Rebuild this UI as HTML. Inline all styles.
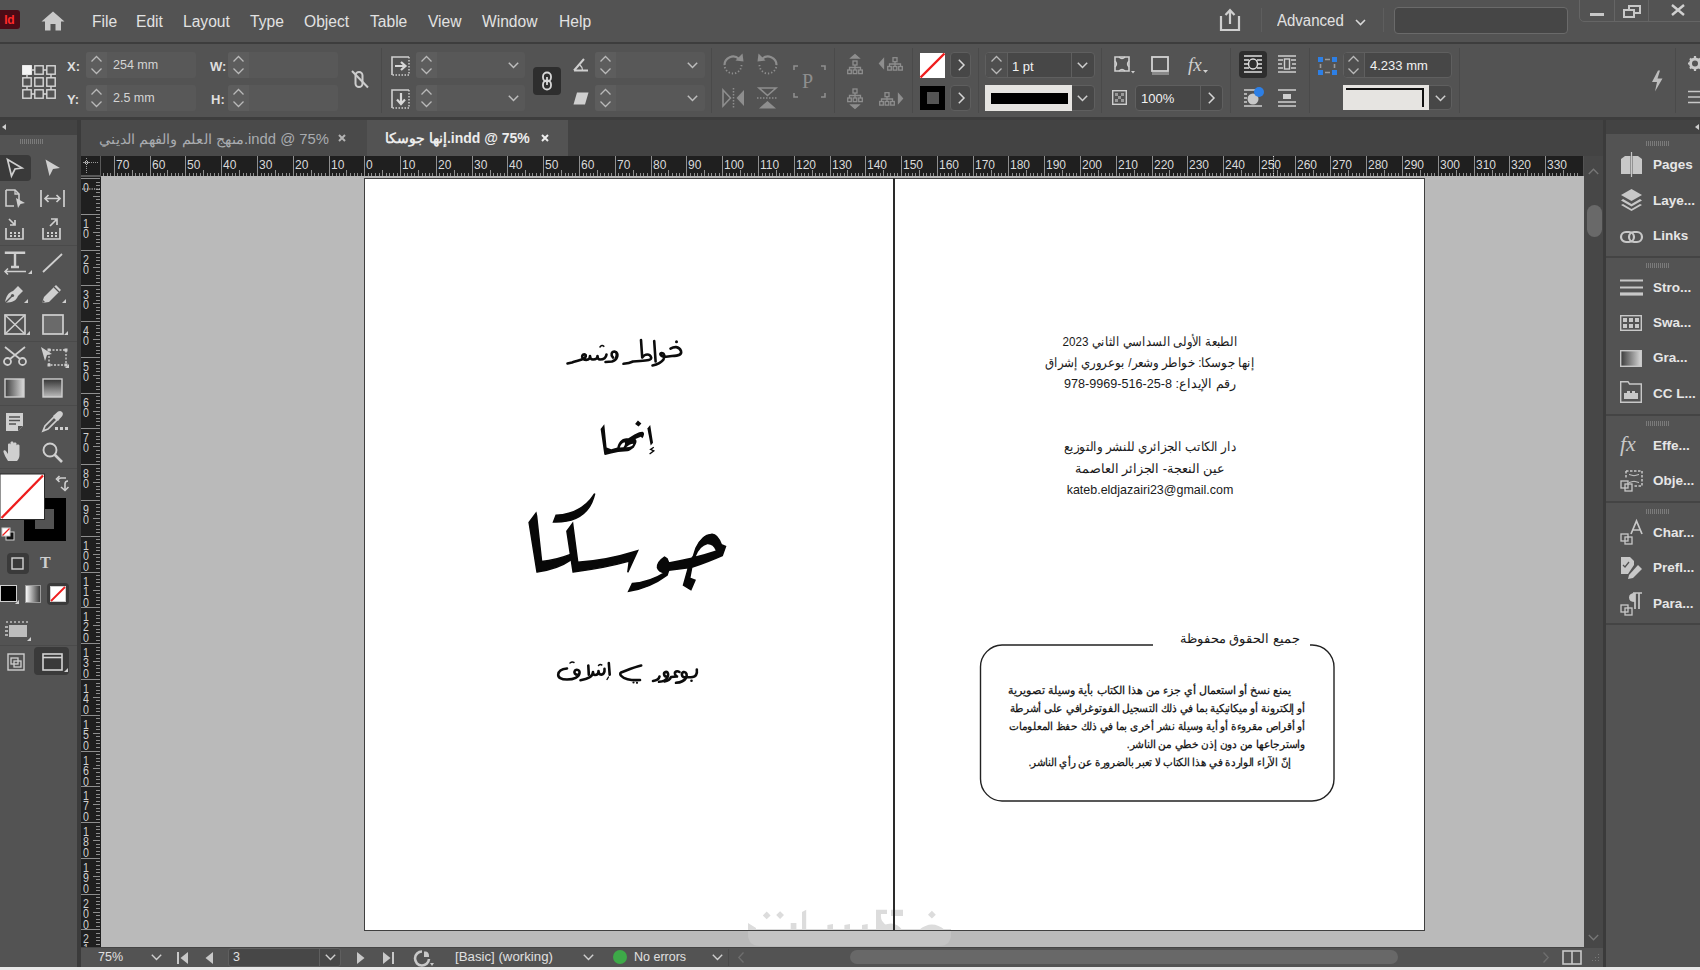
<!DOCTYPE html>
<html><head><meta charset="utf-8"><style>
*{margin:0;padding:0;box-sizing:border-box}
html,body{width:1700px;height:970px;overflow:hidden;background:#535353;font-family:"Liberation Sans",sans-serif;color:#dcdcdc}
.a{position:absolute}
.t{position:absolute;white-space:nowrap;line-height:1}
svg{position:absolute;overflow:visible}
.fld{position:absolute;background:#5a5a5a;border-radius:3px}
.stp{position:absolute;background:#5f5f5f;border-radius:3px 0 0 3px}
.sep{position:absolute;width:1px;background:#4a4a4a}
.ic{fill:none;stroke:#d0d0d0;stroke-width:1.4}
.dim{fill:none;stroke:#8c8c8c;stroke-width:1.5}
.pl{position:absolute;font-weight:bold;font-size:13.5px;color:#e6e6e6;white-space:nowrap;line-height:1}
</style></head><body>
<div class="a" style="left:0;top:0;width:1700px;height:42px;background:#535353"></div>
<div class="a" style="left:0;top:42px;width:1700px;height:2px;background:#3d3d3d"></div>
<div class="a" style="left:0;top:10px;width:20px;height:19px;background:#4c0b16;border-radius:0 3px 3px 0"></div>
<div class="t" style="left:4.3px;top:13.5px;font-size:12px;font-weight:bold;color:#ff2a2a;letter-spacing:-0.3px">Id</div>
<svg style="left:41px;top:11px" width="24" height="20" viewBox="0 0 24 20"><path d="M12 0.5 L23.5 10.5 L20 10.5 L20 19.5 L14.5 19.5 L14.5 13 L9.5 13 L9.5 19.5 L4 19.5 L4 10.5 L0.5 10.5 Z" fill="#c9c9c9"/></svg>
<div class="t" style="left:92px;top:14.2px;font-size:15.6px;color:#e2e2e2">File</div>
<div class="t" style="left:136px;top:14.2px;font-size:15.6px;color:#e2e2e2">Edit</div>
<div class="t" style="left:183px;top:14.2px;font-size:15.6px;color:#e2e2e2">Layout</div>
<div class="t" style="left:250px;top:14.2px;font-size:15.6px;color:#e2e2e2">Type</div>
<div class="t" style="left:304px;top:14.2px;font-size:15.6px;color:#e2e2e2">Object</div>
<div class="t" style="left:370px;top:14.2px;font-size:15.6px;color:#e2e2e2">Table</div>
<div class="t" style="left:428px;top:14.2px;font-size:15.6px;color:#e2e2e2">View</div>
<div class="t" style="left:482px;top:14.2px;font-size:15.6px;color:#e2e2e2">Window</div>
<div class="t" style="left:559px;top:14.2px;font-size:15.6px;color:#e2e2e2">Help</div>
<svg style="left:1219px;top:8px" width="23" height="24" viewBox="0 0 23 24"><path d="M2 8 L2 22 L20 22 L20 8" fill="none" stroke="#cfcfcf" stroke-width="2.2"/><path d="M11 16 L11 2.5 M6.5 7 L11 2.2 L15.5 7" fill="none" stroke="#cfcfcf" stroke-width="2.2"/></svg>
<div class="a" style="left:1261px;top:8px;width:1px;height:24px;background:#5e5e5e"></div>
<div class="t" style="left:1277px;top:12.8px;font-size:15.8px;color:#e2e2e2;transform:scaleX(0.95);transform-origin:0 0">Advanced</div>
<svg style="left:1355px;top:19px" width="11" height="7" viewBox="0 0 11 7"><path d="M1 1 L5.5 5.5 L10 1" fill="none" stroke="#d8d8d8" stroke-width="1.6"/></svg>
<div class="a" style="left:1383px;top:8px;width:1px;height:24px;background:#5e5e5e"></div>
<div class="a" style="left:1394px;top:7px;width:174px;height:27px;background:#464646;border:1px solid #6a6a6a;border-radius:4px"></div>
<div class="a" style="left:1579px;top:-2px;width:125px;height:24px;border:1px solid #656565;border-radius:0 0 0 5px"></div>
<div class="a" style="left:1614px;top:0;width:1px;height:22px;background:#656565"></div>
<div class="a" style="left:1648px;top:0;width:1px;height:22px;background:#656565"></div>
<div class="a" style="left:1590px;top:13px;width:14px;height:3px;background:#c8c8c8"></div>
<svg style="left:1623px;top:5px" width="18" height="13" viewBox="0 0 18 13"><rect x="1" y="5" width="10" height="7" fill="none" stroke="#c8c8c8" stroke-width="2"/><path d="M6 5 L6 1 L17 1 L17 8 L11 8" fill="none" stroke="#c8c8c8" stroke-width="2"/></svg>
<svg style="left:1670px;top:4px" width="16" height="12" viewBox="0 0 16 12"><path d="M2 1 L14 11 M14 1 L2 11" fill="none" stroke="#d0d0d0" stroke-width="2.4"/></svg>
<div class="a" style="left:0;top:117px;width:1700px;height:3px;background:#3d3d3d"></div>
<svg style="left:22px;top:65px" width="33" height="33" viewBox="0 0 33 33"><rect x="0.8" y="0.8" width="8.4" height="8.4" fill="#f4f4f4" stroke="#f4f4f4" stroke-width="1.4"/><rect x="12.8" y="0.8" width="8.4" height="8.4" fill="none" stroke="#d9d9d9" stroke-width="1.4"/><rect x="24.8" y="0.8" width="8.4" height="8.4" fill="none" stroke="#d9d9d9" stroke-width="1.4"/><rect x="0.8" y="12.8" width="8.4" height="8.4" fill="none" stroke="#d9d9d9" stroke-width="1.4"/><rect x="12.8" y="12.8" width="8.4" height="8.4" fill="none" stroke="#d9d9d9" stroke-width="1.4"/><rect x="24.8" y="12.8" width="8.4" height="8.4" fill="none" stroke="#d9d9d9" stroke-width="1.4"/><rect x="0.8" y="24.8" width="8.4" height="8.4" fill="none" stroke="#d9d9d9" stroke-width="1.4"/><rect x="12.8" y="24.8" width="8.4" height="8.4" fill="none" stroke="#d9d9d9" stroke-width="1.4"/><rect x="24.8" y="24.8" width="8.4" height="8.4" fill="none" stroke="#d9d9d9" stroke-width="1.4"/><path d="M9.2 5 L12.8 5 M21.2 5 L24.8 5 M9.2 29 L12.8 29 M21.2 29 L24.8 29 M5 9.2 L5 12.8 M29 9.2 L29 12.8 M5 21.2 L5 24.8 M29 21.2 L29 24.8" stroke="#d9d9d9" stroke-width="1.4"/></svg>
<div class="t" style="left:67px;top:60px;font-size:13px;font-weight:bold;color:#dedede">X:</div>
<div class="t" style="left:67px;top:93px;font-size:13px;font-weight:bold;color:#dedede">Y:</div>
<div class="t" style="left:210px;top:60px;font-size:13px;font-weight:bold;color:#dedede">W:</div>
<div class="t" style="left:211px;top:93px;font-size:13px;font-weight:bold;color:#dedede">H:</div>
<div class="fld" style="left:86px;top:52px;width:110px;height:26px;background:#585858"></div>
<div class="stp" style="left:86px;top:52px;width:21px;height:26px;background:#5d5d5d"></div>
<svg style="left:86px;top:52px" width="21" height="26" viewBox="0 0 21 26"><path d="M5.5 9.5 L10.5 4.5 L15.5 9.5 M5.5 16.5 L10.5 21.5 L15.5 16.5" fill="none" stroke="#b9b9b9" stroke-width="1.3"/></svg>
<div class="fld" style="left:86px;top:85px;width:110px;height:26px;background:#585858"></div>
<div class="stp" style="left:86px;top:85px;width:21px;height:26px;background:#5d5d5d"></div>
<svg style="left:86px;top:85px" width="21" height="26" viewBox="0 0 21 26"><path d="M5.5 9.5 L10.5 4.5 L15.5 9.5 M5.5 16.5 L10.5 21.5 L15.5 16.5" fill="none" stroke="#b9b9b9" stroke-width="1.3"/></svg>
<div class="fld" style="left:228px;top:52px;width:110px;height:26px;background:#585858"></div>
<div class="stp" style="left:228px;top:52px;width:21px;height:26px;background:#5d5d5d"></div>
<svg style="left:228px;top:52px" width="21" height="26" viewBox="0 0 21 26"><path d="M5.5 9.5 L10.5 4.5 L15.5 9.5 M5.5 16.5 L10.5 21.5 L15.5 16.5" fill="none" stroke="#b9b9b9" stroke-width="1.3"/></svg>
<div class="fld" style="left:228px;top:85px;width:110px;height:26px;background:#585858"></div>
<div class="stp" style="left:228px;top:85px;width:21px;height:26px;background:#5d5d5d"></div>
<svg style="left:228px;top:85px" width="21" height="26" viewBox="0 0 21 26"><path d="M5.5 9.5 L10.5 4.5 L15.5 9.5 M5.5 16.5 L10.5 21.5 L15.5 16.5" fill="none" stroke="#b9b9b9" stroke-width="1.3"/></svg>
<div class="t" style="left:113px;top:59px;font-size:12.5px;color:#d4d4d4">254 mm</div>
<div class="t" style="left:113px;top:92px;font-size:12.5px;color:#d4d4d4">2.5 mm</div>
<svg style="left:351px;top:70px" width="18" height="19" viewBox="0 0 18 19"><rect x="4.5" y="2" width="7" height="15" rx="3.5" fill="none" stroke="#cdcdcd" stroke-width="2"/><path d="M1 1 L17 17.5" stroke="#cdcdcd" stroke-width="2"/></svg>
<div class="a" style="left:381px;top:48px;width:1px;height:65px;background:#4a4a4a"></div>
<svg style="left:391px;top:56px" width="20" height="20" viewBox="0 0 20 20"><path d="M1 19 L1 1 L18 1" fill="none" stroke="#d0d0d0" stroke-width="1.6"/><path d="M18 1 L18 19 L1 19" fill="none" stroke="#d0d0d0" stroke-width="1.4" stroke-dasharray="1.5 1.5"/><path d="M4 10 L13 10 M10 6 L14.5 10 L10 14" fill="none" stroke="#d8d8d8" stroke-width="2.2"/></svg>
<svg style="left:391px;top:89px" width="20" height="20" viewBox="0 0 20 20"><path d="M1 19 L1 1 L18 1" fill="none" stroke="#d0d0d0" stroke-width="1.6"/><path d="M18 1 L18 19 L1 19" fill="none" stroke="#d0d0d0" stroke-width="1.4" stroke-dasharray="1.5 1.5"/><path d="M10 4 L10 14 M6 10.5 L10 15 L14 10.5" fill="none" stroke="#d8d8d8" stroke-width="2.2"/></svg>
<div class="fld" style="left:416px;top:52px;width:109px;height:26px;background:#585858"></div>
<div class="stp" style="left:416px;top:52px;width:21px;height:26px;background:#5d5d5d"></div>
<svg style="left:416px;top:52px" width="21" height="26" viewBox="0 0 21 26"><path d="M5.5 9.5 L10.5 4.5 L15.5 9.5 M5.5 16.5 L10.5 21.5 L15.5 16.5" fill="none" stroke="#b9b9b9" stroke-width="1.3"/></svg>
<svg style="left:508px;top:62px" width="11" height="7" viewBox="0 0 11 7"><path d="M0.8 0.8 L5.5 5.5 L10.2 0.8" fill="none" stroke="#bdbdbd" stroke-width="1.5"/></svg>
<div class="fld" style="left:416px;top:85px;width:109px;height:26px;background:#585858"></div>
<div class="stp" style="left:416px;top:85px;width:21px;height:26px;background:#5d5d5d"></div>
<svg style="left:416px;top:85px" width="21" height="26" viewBox="0 0 21 26"><path d="M5.5 9.5 L10.5 4.5 L15.5 9.5 M5.5 16.5 L10.5 21.5 L15.5 16.5" fill="none" stroke="#b9b9b9" stroke-width="1.3"/></svg>
<svg style="left:508px;top:95px" width="11" height="7" viewBox="0 0 11 7"><path d="M0.8 0.8 L5.5 5.5 L10.2 0.8" fill="none" stroke="#bdbdbd" stroke-width="1.5"/></svg>
<div class="a" style="left:533px;top:67px;width:28px;height:28px;background:#2e2e2e;border-radius:4px"></div>
<svg style="left:540px;top:71px" width="14" height="20" viewBox="0 0 14 20"><rect x="3" y="1.5" width="8" height="9" rx="4" fill="none" stroke="#d8d8d8" stroke-width="1.8"/><rect x="3" y="9.5" width="8" height="9" rx="4" fill="none" stroke="#d8d8d8" stroke-width="1.8"/><path d="M7 6 L7 14" stroke="#d8d8d8" stroke-width="1.8"/></svg>
<svg style="left:573px;top:57px" width="16" height="15" viewBox="0 0 16 15"><path d="M1 13.5 L15 13.5 M1 13.5 L11 2" fill="none" stroke="#cfcfcf" stroke-width="2"/><path d="M7 8 Q9.5 10 9.5 13.5" fill="none" stroke="#cfcfcf" stroke-width="1.4"/></svg>
<svg style="left:573px;top:92px" width="16" height="13" viewBox="0 0 16 13"><path d="M4 0.5 L15.5 0.5 L12 12.5 L0.5 12.5 Z" fill="#cfcfcf"/></svg>
<div class="fld" style="left:595px;top:52px;width:110px;height:26px;background:#585858"></div>
<div class="stp" style="left:595px;top:52px;width:21px;height:26px;background:#5d5d5d"></div>
<svg style="left:595px;top:52px" width="21" height="26" viewBox="0 0 21 26"><path d="M5.5 9.5 L10.5 4.5 L15.5 9.5 M5.5 16.5 L10.5 21.5 L15.5 16.5" fill="none" stroke="#b9b9b9" stroke-width="1.3"/></svg>
<svg style="left:687px;top:62px" width="11" height="7" viewBox="0 0 11 7"><path d="M0.8 0.8 L5.5 5.5 L10.2 0.8" fill="none" stroke="#bdbdbd" stroke-width="1.5"/></svg>
<div class="fld" style="left:595px;top:85px;width:110px;height:26px;background:#585858"></div>
<div class="stp" style="left:595px;top:85px;width:21px;height:26px;background:#5d5d5d"></div>
<svg style="left:595px;top:85px" width="21" height="26" viewBox="0 0 21 26"><path d="M5.5 9.5 L10.5 4.5 L15.5 9.5 M5.5 16.5 L10.5 21.5 L15.5 16.5" fill="none" stroke="#b9b9b9" stroke-width="1.3"/></svg>
<svg style="left:687px;top:95px" width="11" height="7" viewBox="0 0 11 7"><path d="M0.8 0.8 L5.5 5.5 L10.2 0.8" fill="none" stroke="#bdbdbd" stroke-width="1.5"/></svg>
<div class="a" style="left:711px;top:48px;width:1px;height:65px;background:#4a4a4a"></div>
<svg style="left:722px;top:53px" width="23" height="22" viewBox="0 0 23 22"><path d="M2.5 12 A8.5 8.5 0 0 1 17 6" fill="none" stroke="#8e8e8e" stroke-width="2.2"/><path d="M19.5 12 A8.5 8.5 0 0 1 2.5 12" fill="none" stroke="#8e8e8e" stroke-width="1.8" stroke-dasharray="1.3 2"/><path d="M13.5 7.5 L21.5 8.5 L20.5 0.5 Z" fill="#8e8e8e"/></svg>
<svg style="left:756px;top:53px" width="23" height="22" viewBox="0 0 23 22"><path d="M20.5 12 A8.5 8.5 0 0 0 6 6" fill="none" stroke="#8e8e8e" stroke-width="2.2"/><path d="M3.5 12 A8.5 8.5 0 0 0 20.5 12" fill="none" stroke="#8e8e8e" stroke-width="1.8" stroke-dasharray="1.3 2"/><path d="M9.5 7.5 L1.5 8.5 L2.5 0.5 Z" fill="#8e8e8e"/></svg>
<svg style="left:722px;top:88px" width="23" height="20" viewBox="0 0 23 20"><path d="M1 2 L8.5 10 L1 18 Z" fill="none" stroke="#8e8e8e" stroke-width="1.6"/><path d="M22 2 L14.5 10 L22 18 Z" fill="#8e8e8e"/><path d="M11.5 0 L11.5 20" stroke="#8e8e8e" stroke-width="1.5" stroke-dasharray="1.5 1.5"/></svg>
<svg style="left:757px;top:87px" width="21" height="22" viewBox="0 0 21 22"><path d="M2 1 L19 1 L10.5 8.5 Z" fill="none" stroke="#8e8e8e" stroke-width="1.6"/><path d="M2 21.5 L19 21.5 L10.5 14 Z" fill="#8e8e8e"/><path d="M0 11 L21 11" stroke="#8e8e8e" stroke-width="1.5" stroke-dasharray="1.5 1.5"/></svg>
<svg style="left:793px;top:65px" width="33" height="33" viewBox="0 0 33 33"><path d="M1 5 L1 1 L5 1 M28 1 L32 1 L32 5 M1 28 L1 32 L5 32 M32 28 L32 32 L28 32" fill="none" stroke="#8e8e8e" stroke-width="1.6"/></svg>
<div class="t" style="left:802px;top:71px;font-family:'Liberation Serif',serif;font-size:20px;color:#8e8e8e">P</div>
<div class="a" style="left:834px;top:48px;width:1px;height:65px;background:#4a4a4a"></div>
<svg style="left:847px;top:54px" width="26" height="22" viewBox="0 0 26 22"><g fill="none" stroke="#8e8e8e" stroke-width="1.3"><path d="M4 4 L8 0.5 L12 4 Z" fill="#8e8e8e"/><rect x="6" y="7" width="4" height="4"/><rect x="0.7" y="16" width="3.6" height="3.6"/><rect x="6.2" y="16" width="3.6" height="3.6"/><rect x="11.7" y="16" width="3.6" height="3.6"/><path d="M8 11 L8 16 M2.5 16 L2.5 13.5 L13.5 13.5 L13.5 16"/></g></svg>
<svg style="left:847px;top:88px" width="26" height="22" viewBox="0 0 26 22"><g fill="none" stroke="#8e8e8e" stroke-width="1.3"><rect x="6" y="1" width="4" height="4"/><rect x="0.7" y="10" width="3.6" height="3.6"/><rect x="6.2" y="10" width="3.6" height="3.6"/><rect x="11.7" y="10" width="3.6" height="3.6"/><path d="M8 5 L8 10 M2.5 10 L2.5 7.5 L13.5 7.5 L13.5 10"/><path d="M4 17 L8 20.5 L12 17 Z" fill="#8e8e8e"/></g></svg>
<svg style="left:879px;top:57px" width="26" height="22" viewBox="0 0 26 22"><g fill="none" stroke="#8e8e8e" stroke-width="1.3"><path d="M4.5 2 L0.5 6.5 L4.5 11 Z" fill="#8e8e8e"/><rect x="14" y="0.7" width="4" height="4"/><rect x="8.7" y="9.5" width="3.6" height="3.6"/><rect x="14.2" y="9.5" width="3.6" height="3.6"/><rect x="19.7" y="9.5" width="3.6" height="3.6"/><path d="M16 4.7 L16 9.5 M10.5 9.5 L10.5 7 L21.5 7 L21.5 9.5"/></g></svg>
<svg style="left:879px;top:92px" width="26" height="22" viewBox="0 0 26 22"><g fill="none" stroke="#8e8e8e" stroke-width="1.3"><path d="M19.5 2 L23.5 6.5 L19.5 11 Z" fill="#8e8e8e"/><rect x="6" y="0.7" width="4" height="4"/><rect x="0.7" y="9.5" width="3.6" height="3.6"/><rect x="6.2" y="9.5" width="3.6" height="3.6"/><rect x="11.7" y="9.5" width="3.6" height="3.6"/><path d="M8 4.7 L8 9.5 M2.5 9.5 L2.5 7 L13.5 7 L13.5 9.5"/></g></svg>
<div class="a" style="left:912px;top:48px;width:1px;height:65px;background:#4a4a4a"></div>
<svg style="left:920px;top:53px" width="25" height="25" viewBox="0 0 25 25"><rect x="0" y="0" width="25" height="25" fill="#fff"/><path d="M0.5 24.5 L24.5 0.5" stroke="#ee1c1c" stroke-width="2.4"/></svg>
<div class="a" style="left:920px;top:86px;width:25px;height:24px;background:#000"></div>
<div class="a" style="left:927px;top:92px;width:12px;height:12px;background:#545454"></div>
<div class="a" style="left:950px;top:52px;width:21px;height:26px;background:#474747;border:1px solid #5e5e5e;border-radius:4px"></div>
<svg style="left:958px;top:59px" width="7" height="12" viewBox="0 0 7 12"><path d="M0.8 0.8 L6 6 L0.8 11.2" fill="none" stroke="#d6d6d6" stroke-width="1.5"/></svg>
<div class="a" style="left:950px;top:85px;width:21px;height:26px;background:#474747;border:1px solid #5e5e5e;border-radius:4px"></div>
<svg style="left:958px;top:92px" width="7" height="12" viewBox="0 0 7 12"><path d="M0.8 0.8 L6 6 L0.8 11.2" fill="none" stroke="#d6d6d6" stroke-width="1.5"/></svg>
<div class="a" style="left:978px;top:48px;width:1px;height:65px;background:#4a4a4a"></div>
<div class="a" style="left:985px;top:52px;width:110px;height:26px;background:#474747;border:1px solid #5f5f5f;border-radius:4px"></div>
<div class="a" style="left:986px;top:53px;width:21px;height:24px;background:#4f4f4f;border-radius:3px 0 0 3px"></div>
<div class="a" style="left:1007px;top:53px;width:1px;height:24px;background:#5f5f5f"></div>
<div class="a" style="left:1071px;top:53px;width:1px;height:24px;background:#5f5f5f"></div>
<svg style="left:986px;top:52px" width="21" height="26" viewBox="0 0 21 26"><path d="M5.5 9.5 L10.5 4.5 L15.5 9.5 M5.5 16.5 L10.5 21.5 L15.5 16.5" fill="none" stroke="#b9b9b9" stroke-width="1.3"/></svg>
<div class="t" style="left:1012px;top:60px;font-size:13px;color:#f2f2f2">1 pt</div>
<svg style="left:1077px;top:62px" width="11" height="7" viewBox="0 0 11 7"><path d="M0.8 0.8 L5.5 5.5 L10.2 0.8" fill="none" stroke="#cfcfcf" stroke-width="1.5"/></svg>
<div class="a" style="left:985px;top:85px;width:110px;height:26px;background:#474747;border:1px solid #5f5f5f;border-radius:4px"></div>
<div class="a" style="left:985px;top:85px;width:87px;height:26px;background:#e6e4e1"></div>
<div class="a" style="left:991px;top:93px;width:77px;height:11px;background:#000"></div>
<svg style="left:1077px;top:95px" width="11" height="7" viewBox="0 0 11 7"><path d="M0.8 0.8 L5.5 5.5 L10.2 0.8" fill="none" stroke="#cfcfcf" stroke-width="1.5"/></svg>
<div class="a" style="left:1101px;top:48px;width:1px;height:65px;background:#4a4a4a"></div>
<svg style="left:1114px;top:56px" width="22" height="18" viewBox="0 0 22 18"><path d="M1 1 L15 1 L15 15 L1 15 Z" fill="none" stroke="#cfcfcf" stroke-width="1.6"/><path d="M1 5 Q4 8 1 11 M15 5 Q12 8 15 11 M5 1 Q8 4 11 1 M5 15 Q8 12 11 15" fill="none" stroke="#cfcfcf" stroke-width="1.4"/><path d="M17 15 L21 15 L19 17.5 Z" fill="#cfcfcf"/></svg>
<svg style="left:1151px;top:56px" width="19" height="20" viewBox="0 0 19 20"><rect x="1" y="1" width="16" height="14" fill="none" stroke="#d2d2d2" stroke-width="1.8"/><rect x="1" y="16" width="17" height="3" fill="#8a8a8a"/></svg>
<div class="t" style="left:1188px;top:55px;font-family:'Liberation Serif',serif;font-style:italic;font-size:19px;color:#cfcfcf">fx</div>
<svg style="left:1203px;top:70px" width="5" height="4" viewBox="0 0 5 4"><path d="M0 0 L5 0 L2.5 3 Z" fill="#cfcfcf"/></svg>
<svg style="left:1112px;top:90px" width="15" height="15" viewBox="0 0 15 15"><rect x="0.7" y="0.7" width="13.6" height="13.6" fill="none" stroke="#cfcfcf" stroke-width="1.4"/><path d="M3 3 h3 v3 h-3z M9 3 h3 v3 h-3z M6 6 h3 v3 h-3z M3 9 h3 v3 h-3z M9 9 h3 v3 h-3z" fill="#9a9a9a"/></svg>
<div class="a" style="left:1135px;top:85px;width:88px;height:26px;background:#474747;border:1px solid #5f5f5f;border-radius:4px"></div>
<div class="a" style="left:1200px;top:86px;width:1px;height:24px;background:#5f5f5f"></div>
<div class="t" style="left:1141px;top:92px;font-size:13px;color:#f2f2f2">100%</div>
<svg style="left:1208px;top:92px" width="7" height="12" viewBox="0 0 7 12"><path d="M0.8 0.8 L6 6 L0.8 11.2" fill="none" stroke="#d6d6d6" stroke-width="1.5"/></svg>
<div class="a" style="left:1230px;top:48px;width:1px;height:65px;background:#4a4a4a"></div>
<div class="a" style="left:1239px;top:51px;width:28px;height:27px;background:#2e2e2e;border-radius:4px"></div>
<svg style="left:1244px;top:55px" width="19" height="18" viewBox="0 0 19 18"><path d="M0 1 H18 M0 5 H5 M13 5 H18 M0 9 H4 M14 9 H18 M0 13 H5 M13 13 H18 M0 17 H18" stroke="#e0e0e0" stroke-width="1.6"/><ellipse cx="9" cy="9" rx="4.5" ry="5" fill="none" stroke="#e0e0e0" stroke-width="1.4"/></svg>
<svg style="left:1278px;top:55px" width="19" height="18" viewBox="0 0 19 18"><path d="M0 1 H18 M0 5 H5 M13 5 H18 M0 9 H4 M14 9 H18 M0 13 H5 M13 13 H18 M0 17 H18" stroke="#cfcfcf" stroke-width="1.5"/><rect x="6.5" y="4" width="5" height="10" fill="none" stroke="#cfcfcf" stroke-width="1.4"/></svg>
<svg style="left:1244px;top:87px" width="21" height="20" viewBox="0 0 21 20"><path d="M0 3 H18 M0 7 H3 M0 11 H3 M0 15 H3 M0 19 H18" stroke="#cfcfcf" stroke-width="1.5"/><circle cx="9" cy="12" r="5.5" fill="#c8c8c8"/><circle cx="15" cy="5" r="5" fill="#2d7fe5"/></svg>
<svg style="left:1278px;top:89px" width="19" height="18" viewBox="0 0 19 18"><path d="M0 1 H18 M0 13 H18 M0 17 H18" stroke="#cfcfcf" stroke-width="1.5"/><rect x="5" y="5" width="8" height="5" fill="#cfcfcf"/></svg>
<div class="a" style="left:1309px;top:48px;width:1px;height:65px;background:#4a4a4a"></div>
<svg style="left:1318px;top:57px" width="19" height="18" viewBox="0 0 19 18"><path d="M7 2.5 H12 M7 15.5 H12 M2.5 7 V11 M16.5 7 V11" stroke="#9a9a9a" stroke-width="1.6"/><rect x="0" y="0" width="5" height="5" fill="#2d7fe5"/><rect x="14" y="0" width="5" height="5" fill="#2d7fe5"/><rect x="0" y="13" width="5" height="5" fill="#2d7fe5"/><rect x="14" y="13" width="5" height="5" fill="#2d7fe5"/></svg>
<div class="a" style="left:1343px;top:52px;width:109px;height:26px;background:#474747;border:1px solid #5f5f5f;border-radius:4px"></div>
<div class="a" style="left:1344px;top:53px;width:20px;height:24px;background:#4f4f4f;border-radius:3px 0 0 3px"></div>
<div class="a" style="left:1364px;top:53px;width:1px;height:24px;background:#5f5f5f"></div>
<svg style="left:1343px;top:52px" width="21" height="26" viewBox="0 0 21 26"><path d="M5.5 9.5 L10.5 4.5 L15.5 9.5 M5.5 16.5 L10.5 21.5 L15.5 16.5" fill="none" stroke="#b9b9b9" stroke-width="1.3"/></svg>
<div class="t" style="left:1370px;top:59px;font-size:13px;color:#f2f2f2">4.233 mm</div>
<div class="a" style="left:1343px;top:85px;width:109px;height:25px;background:#474747;border:1px solid #5f5f5f;border-radius:4px"></div>
<div class="a" style="left:1343px;top:85px;width:86px;height:25px;background:#e6e4e1"></div>
<div class="a" style="left:1346px;top:88px;width:77px;height:2px;background:#111"></div>
<div class="a" style="left:1422px;top:88px;width:2px;height:19px;background:#111"></div>
<svg style="left:1435px;top:95px" width="11" height="7" viewBox="0 0 11 7"><path d="M0.8 0.8 L5.5 5.5 L10.2 0.8" fill="none" stroke="#cfcfcf" stroke-width="1.5"/></svg>
<div class="a" style="left:1459px;top:48px;width:1px;height:65px;background:#4a4a4a"></div>
<svg style="left:1650px;top:70px" width="14" height="22" viewBox="0 0 14 22"><path d="M8 0.5 L2 12 L7 12 L5 21.5 L12.5 8.5 L7.5 8.5 L10 0.5 Z" fill="#bdbdbd"/></svg>
<div class="a" style="left:1675px;top:48px;width:1px;height:65px;background:#4a4a4a"></div>
<svg style="left:1688px;top:56px" width="14" height="15" viewBox="0 0 14 15"><circle cx="7" cy="7.5" r="4.5" fill="none" stroke="#c8c8c8" stroke-width="3"/><path d="M7 0 V3 M7 12 V15 M0 7.5 H3 M11 7.5 H14 M2 2.5 L4 4.5 M10 10.5 L12 12.5 M12 2.5 L10 4.5 M4 10.5 L2 12.5" stroke="#c8c8c8" stroke-width="2.2"/></svg>
<svg style="left:1688px;top:90px" width="14" height="14" viewBox="0 0 14 14"><path d="M0 1.5 H14 M0 7 H14 M0 12.5 H14" stroke="#c8c8c8" stroke-width="1.6"/></svg>
<div class="a" style="left:0;top:120px;width:77px;height:847px;background:#535353"></div>
<div class="a" style="left:0;top:120px;width:77px;height:15px;background:#434343"></div>
<svg style="left:2px;top:124px" width="4" height="6" viewBox="0 0 4 6"><path d="M4 0 L0 3 L4 6 Z" fill="#cfcfcf"/></svg>
<div class="a" style="left:77px;top:120px;width:4px;height:847px;background:#3b3b3b"></div>
<svg style="left:20px;top:139px" width="25" height="5" viewBox="0 0 25 5"><path d="M0.5 0 V5 M2.5 0 V5 M4.5 0 V5 M6.5 0 V5 M8.5 0 V5 M10.5 0 V5 M12.5 0 V5 M14.5 0 V5 M16.5 0 V5 M18.5 0 V5 M20.5 0 V5 M22.5 0 V5" stroke="#7a7a7a" stroke-width="1"/></svg>
<div class="a" style="left:0;top:245px;width:77px;height:1px;background:#4a4a4a"></div>
<div class="a" style="left:0;top:341px;width:77px;height:1px;background:#4a4a4a"></div>
<div class="a" style="left:0;top:405px;width:77px;height:1px;background:#4a4a4a"></div>
<div class="a" style="left:0;top:468px;width:77px;height:1px;background:#4a4a4a"></div>
<div class="a" style="left:0;top:645px;width:77px;height:1px;background:#4a4a4a"></div>
<div class="a" style="left:0;top:155px;width:31px;height:26px;background:#3a3a3a;border-radius:0 4px 4px 0"></div>
<svg style="left:6px;top:158px" width="18" height="20" viewBox="0 0 18 20"><path d="M1.5 1.5 L16 10 L9 11 L5.5 18 Z" fill="none" stroke="#cfcfcf" stroke-width="1.7"/></svg>
<svg style="left:44px;top:158px" width="18" height="20" viewBox="0 0 18 20"><path d="M1.5 1.5 L16 10 L9 11 L5.5 18 Z" fill="#cfcfcf"/></svg>
<svg style="left:5px;top:189px" width="21" height="19" viewBox="0 0 21 19"><path d="M1 1 H10 L14 5 V12 M1 1 V17 H9" fill="none" stroke="#cfcfcf" stroke-width="1.6"/><path d="M10 1 V5 H14" fill="none" stroke="#cfcfcf" stroke-width="1.3"/><path d="M11 9 L20 14 L15.5 15 L13 19 Z" fill="#cfcfcf"/></svg>
<svg style="left:40px;top:190px" width="25" height="17" viewBox="0 0 25 17"><path d="M1 0 V17 M24 0 V17 M5 8.5 H20 M8.5 5 L5 8.5 L8.5 12 M16.5 5 L20 8.5 L16.5 12" fill="none" stroke="#cfcfcf" stroke-width="1.7"/></svg>
<svg style="left:5px;top:218px" width="19" height="22" viewBox="0 0 19 22"><path d="M1 10 V21 H18 V10" fill="none" stroke="#cfcfcf" stroke-width="1.7"/><path d="M4 1 L10 7 M10 2 V7 H5" fill="none" stroke="#cfcfcf" stroke-width="1.7"/><path d="M5 14 h2 v2 h-2z M9 14 h2 v2 h-2z M13 14 h2 v2 h-2z M5 17 h2 v2 h-2z M9 17 h2 v2 h-2z M13 17 h2 v2 h-2z" fill="#cfcfcf"/></svg>
<svg style="left:42px;top:218px" width="19" height="22" viewBox="0 0 19 22"><path d="M1 10 V21 H18 V10" fill="none" stroke="#cfcfcf" stroke-width="1.7"/><path d="M8 8 L15 1 M9 1 H15 V7" fill="none" stroke="#cfcfcf" stroke-width="1.7"/><path d="M5 14 h2 v2 h-2z M9 14 h2 v2 h-2z M13 14 h2 v2 h-2z M5 17 h2 v2 h-2z M9 17 h2 v2 h-2z M13 17 h2 v2 h-2z" fill="#cfcfcf"/></svg>
<svg style="left:4px;top:252px" width="28" height="22" viewBox="0 0 28 22"><path d="M2 2 V0.8 H20 V2 M11 1 V15 M7 15 H15" fill="none" stroke="#cfcfcf" stroke-width="2.4"/><path d="M1 19.5 H22 M4 16.5 L1 19.5 L4 22.5" fill="none" stroke="#cfcfcf" stroke-width="1.5"/><path d="M24 22 L28 22 L28 18 Z" fill="#cfcfcf"/></svg>
<svg style="left:42px;top:253px" width="21" height="20" viewBox="0 0 21 20"><path d="M1 19 L20 1" stroke="#cfcfcf" stroke-width="1.8"/></svg>
<svg style="left:4px;top:284px" width="24" height="20" viewBox="0 0 24 20"><path d="M1 19 C2 12 4 9 9 7 L14 2 L19 7 L14 12 C12 17 9 18 1 19 Z" fill="#cfcfcf"/><path d="M1 19 L8 12" stroke="#535353" stroke-width="1.5"/><circle cx="8.5" cy="11.5" r="1.6" fill="#535353"/><path d="M20 19 L24 19 L24 15 Z" fill="#cfcfcf"/></svg>
<svg style="left:41px;top:284px" width="25" height="20" viewBox="0 0 25 20"><path d="M1 19 L3 13 L15 1 L20 6 L8 18 Z" fill="#cfcfcf"/><path d="M1 19 L4 18 L2 16 Z" fill="#535353"/><path d="M13 3 L18 8" stroke="#535353" stroke-width="1.3"/><path d="M21 19 L25 19 L25 15 Z" fill="#cfcfcf"/></svg>
<svg style="left:4px;top:314px" width="26" height="22" viewBox="0 0 26 22"><rect x="1" y="1" width="20" height="19" fill="none" stroke="#cfcfcf" stroke-width="1.7"/><path d="M1 1 L21 20 M21 1 L1 20" stroke="#cfcfcf" stroke-width="1.5"/><path d="M22 21 L26 21 L26 17 Z" fill="#cfcfcf"/></svg>
<svg style="left:42px;top:314px" width="26" height="22" viewBox="0 0 26 22"><rect x="1" y="1" width="20" height="19" fill="#6a6a6a" stroke="#cfcfcf" stroke-width="1.7"/><path d="M22 21 L26 21 L26 17 Z" fill="#cfcfcf"/></svg>
<svg style="left:3px;top:346px" width="24" height="20" viewBox="0 0 24 20"><circle cx="4.5" cy="15.5" r="3.5" fill="none" stroke="#cfcfcf" stroke-width="1.8"/><circle cx="19.5" cy="15.5" r="3.5" fill="none" stroke="#cfcfcf" stroke-width="1.8"/><path d="M7 13 L22 1 M17 13 L2 1" stroke="#cfcfcf" stroke-width="1.8"/></svg>
<svg style="left:40px;top:346px" width="29" height="22" viewBox="0 0 29 22"><path d="M1 1 L12 8 L7 9 L5 15 Z" fill="#cfcfcf"/><rect x="9" y="4" width="17" height="15" fill="none" stroke="#cfcfcf" stroke-width="1.3" stroke-dasharray="2 1.5"/><rect x="7.5" y="2.5" width="3" height="3" fill="#cfcfcf"/><rect x="24.5" y="2.5" width="3" height="3" fill="#cfcfcf"/><rect x="24.5" y="17.5" width="3" height="3" fill="#cfcfcf"/><rect x="7.5" y="17.5" width="3" height="3" fill="#cfcfcf"/><path d="M25 22 L29 22 L29 18 Z" fill="#cfcfcf"/></svg>
<svg style="left:4px;top:378px" width="21" height="20" viewBox="0 0 21 20"><defs><linearGradient id="gr1"><stop offset="0" stop-color="#3c3c3c"/><stop offset="1" stop-color="#dcdcdc"/></linearGradient></defs><rect x="1" y="1" width="19" height="18" fill="url(#gr1)" stroke="#cfcfcf" stroke-width="1.4"/></svg>
<svg style="left:42px;top:378px" width="21" height="20" viewBox="0 0 21 20"><defs><linearGradient id="gr2" x1="0" y1="0" x2="0" y2="1"><stop offset="0" stop-color="#333"/><stop offset="1" stop-color="#bbb"/></linearGradient></defs><rect x="1" y="1" width="19" height="18" fill="url(#gr2)" stroke="#cfcfcf" stroke-width="1.4"/></svg>
<svg style="left:5px;top:412px" width="19" height="20" viewBox="0 0 19 20"><path d="M1 1 H18 V14 L13 19 H1 Z" fill="#cfcfcf"/><path d="M4 5 H15 M4 8.5 H15 M4 12 H11" stroke="#535353" stroke-width="1.6"/><path d="M13 19 V14 H18" fill="#535353"/></svg>
<svg style="left:41px;top:411px" width="28" height="22" viewBox="0 0 28 22"><path d="M2 20 L4 15 L13 6 L16 9 L7 18 Z" fill="none" stroke="#cfcfcf" stroke-width="1.7"/><path d="M12 5 L17 0.5 Q20 -1 21.5 1.5 Q23 4 19 7.5 L17 10 Z" fill="#cfcfcf"/><path d="M14 16 h3 v3 h-3z M19 16 h3 v3 h-3z M24 16 h3 v3 h-3z" fill="#cfcfcf"/></svg>
<svg style="left:3px;top:441px" width="22" height="21" viewBox="0 0 22 21"><path d="M5 20 C3 17 1 13 0.5 11 C0 9 2 8.5 3 10 L5 13 V3.5 C5 2 7.5 2 7.5 3.5 V9 V1.5 C7.5 0 10.5 0 10.5 1.5 V9 V2.5 C10.5 1 13.5 1 13.5 2.5 V9.5 V4.5 C13.5 3 16.5 3 16.5 4.5 V14 C16.5 17 15 19 14 20 Z" fill="#cfcfcf"/></svg>
<svg style="left:42px;top:442px" width="21" height="21" viewBox="0 0 21 21"><circle cx="8" cy="8" r="6.5" fill="none" stroke="#cfcfcf" stroke-width="1.9"/><path d="M12.5 12.5 L20 20" stroke="#cfcfcf" stroke-width="2.6"/></svg>
<div class="a" style="left:24px;top:498px;width:42px;height:43px;background:#000"></div>
<div class="a" style="left:35px;top:509px;width:19px;height:20px;background:#535353"></div>
<svg style="left:0;top:474px" width="45" height="46" viewBox="0 0 45 46"><rect x="0" y="0" width="44.5" height="45.5" fill="#fff" stroke="#2b2b2b" stroke-width="1"/><path d="M1.5 44 L43 1.5" stroke="#ee1c1c" stroke-width="2.3"/></svg>
<svg style="left:56px;top:476px" width="14" height="15" viewBox="0 0 14 15"><path d="M2 5 Q2 2 5 2 H10 M9 14 V8 Q9 5 12 5" fill="none" stroke="#cfcfcf" stroke-width="1.6"/><path d="M3.5 0 L0.5 3 L3.5 6 M5 11 L9 14.5 L12.5 11" fill="none" stroke="#cfcfcf" stroke-width="1.6"/></svg>
<svg style="left:1px;top:527px" width="14" height="14" viewBox="0 0 14 14"><rect x="5" y="5" width="8" height="8" fill="#111" stroke="#cfcfcf" stroke-width="1"/><rect x="1" y="1" width="8" height="8" fill="#fff" stroke="#cfcfcf" stroke-width="1"/><path d="M1.5 8.5 L8.5 1.5" stroke="#ee1c1c" stroke-width="1.3"/></svg>
<div class="a" style="left:7px;top:553px;width:22px;height:21px;background:#3a3a3a;border-radius:4px"></div>
<svg style="left:11px;top:557px" width="13" height="13" viewBox="0 0 13 13"><rect x="1" y="1" width="11" height="11" fill="none" stroke="#d4d4d4" stroke-width="1.4"/></svg>
<div class="t" style="left:40px;top:555px;font-family:'Liberation Serif',serif;font-size:16px;font-weight:bold;color:#cfcfcf">T</div>
<div class="a" style="left:0;top:585px;width:17px;height:17px;background:#000;border:1px solid #cfcfcf"></div>
<svg style="left:15px;top:600px" width="4" height="4" viewBox="0 0 4 4"><path d="M0 4 H4 V0 Z" fill="#cfcfcf"/></svg>
<svg style="left:25px;top:585px" width="16" height="18" viewBox="0 0 16 18"><defs><linearGradient id="gr3"><stop offset="0" stop-color="#fff"/><stop offset="1" stop-color="#333"/></linearGradient></defs><rect x="0.5" y="0.5" width="15" height="17" fill="url(#gr3)" stroke="#9a9a9a" stroke-width="1"/></svg>
<div class="a" style="left:47px;top:583px;width:22px;height:22px;background:#3a3a3a;border-radius:4px"></div>
<svg style="left:50px;top:586px" width="16" height="16" viewBox="0 0 16 16"><rect x="0.5" y="0.5" width="15" height="15" fill="#fff" stroke="#cfcfcf" stroke-width="1"/><path d="M1 15 L15 1" stroke="#ee1c1c" stroke-width="1.8"/></svg>
<svg style="left:5px;top:619px" width="26" height="23" viewBox="0 0 26 23"><path d="M4 6 H22 V18 H4 Z" fill="#bdbdbd"/><path d="M2 2 V4 M6 2 V4 M10 2 V4 M14 2 V4 M18 2 V4 M22 2 V4 M0 8 H3 M0 12 H3 M0 16 H3" stroke="#cfcfcf" stroke-width="1.3"/><path d="M22 22 L26 22 L26 18 Z" fill="#cfcfcf"/></svg>
<svg style="left:7px;top:653px" width="18" height="18" viewBox="0 0 18 18"><rect x="1" y="1" width="16" height="16" fill="none" stroke="#cfcfcf" stroke-width="1.4"/><rect x="4" y="5" width="7" height="6" fill="none" stroke="#cfcfcf" stroke-width="1.3"/><rect x="7" y="8" width="7" height="6" fill="none" stroke="#cfcfcf" stroke-width="1.3"/></svg>
<div class="a" style="left:34px;top:647px;width:35px;height:28px;background:#3a3a3a;border-radius:4px"></div>
<svg style="left:42px;top:653px" width="26" height="20" viewBox="0 0 26 20"><rect x="1" y="1" width="19" height="16" fill="none" stroke="#d4d4d4" stroke-width="1.6"/><path d="M1 4.5 H20" stroke="#d4d4d4" stroke-width="1.6"/><path d="M22 19 L26 19 L26 15 Z" fill="#cfcfcf"/></svg>
<div class="a" style="left:81px;top:120px;width:1522px;height:36px;background:#434343"></div>
<div class="a" style="left:81px;top:120px;width:286px;height:36px;background:#4a4a4a"></div>
<div class="a" style="left:367px;top:120px;width:201px;height:36px;background:#535353"></div>
<div class="t" style="left:99px;top:131.5px;font-size:14.3px;color:#a9acb0;direction:ltr;unicode-bidi:isolate;transform:scaleX(1.036);transform-origin:0 0">منهج العلم والفهم الديني.indd @ 75%</div>
<svg style="left:338px;top:134px" width="8" height="8" viewBox="0 0 8 8"><path d="M1 1 L7 7 M7 1 L1 7" stroke="#b4b4b4" stroke-width="2"/></svg>
<div class="t" style="left:385px;top:131px;font-size:14px;font-weight:bold;color:#ececec">إنها جوسكا.indd @ 75%</div>
<svg style="left:541px;top:134px" width="8" height="8" viewBox="0 0 8 8"><path d="M1 1 L7 7 M7 1 L1 7" stroke="#ededed" stroke-width="2"/></svg>
<div class="a" style="left:100px;top:176px;width:1484px;height:771px;background:#bababa"></div>
<div class="a" style="left:1584px;top:156px;width:19px;height:792px;background:#474747"></div>
<svg style="left:1588px;top:168px" width="11" height="7" viewBox="0 0 11 7"><path d="M0.8 6 L5.5 1.2 L10.2 6" fill="none" stroke="#777" stroke-width="1.3"/></svg>
<div class="a" style="left:1586.5px;top:205px;width:15px;height:32px;background:#696969;border-radius:8px"></div>
<svg style="left:1588px;top:934px" width="11" height="7" viewBox="0 0 11 7"><path d="M0.8 1 L5.5 5.8 L10.2 1" fill="none" stroke="#777" stroke-width="1.3"/></svg>
<div class="a" style="left:364px;top:178px;width:1061px;height:753px;background:#fff;border:1.5px solid #3f3f3f"></div>
<div class="a" style="left:893px;top:178px;width:2px;height:753px;background:#2a2a2a"></div>
<div class="a" style="left:81px;top:156px;width:1502px;height:20px;background:#1f1f1f"></div>
<div class="a" style="left:81px;top:176px;width:20px;height:771px;background:#1f1f1f"></div>
<div class="a" style="left:100px;top:156px;width:1px;height:21px;background:#5a5a5a"></div>
<div class="a" style="left:81px;top:175px;width:20px;height:2px;background:#5a5a5a"></div>
<svg style="left:83px;top:158px" width="16" height="16" viewBox="0 0 16 16"><path d="M0 4.5 H16 M3.5 0 V16" stroke="#9a9a9a" stroke-width="1" stroke-dasharray="1 1"/><path d="M3.5 2.5 L5.5 4.5 L3.5 6.5 L1.5 4.5 Z" fill="none" stroke="#bdbdbd" stroke-width="1"/></svg>
<svg style="left:0;top:0" width="1700" height="970" viewBox="0 0 1700 970"><path d="M103.5 173 V176 M107.5 173 V176 M110.5 173 V176 M114.5 156 V176 M117.5 173 V176 M121.5 173 V176 M125.5 173 V176 M128.5 173 V176 M132.5 170 V176 M135.5 173 V176 M139.5 173 V176 M142.5 173 V176 M146.5 173 V176 M150.5 156 V176 M153.5 173 V176 M157.5 173 V176 M160.5 173 V176 M164.5 173 V176 M167.5 170 V176 M171.5 173 V176 M175.5 173 V176 M178.5 173 V176 M182.5 173 V176 M185.5 156 V176 M189.5 173 V176 M193.5 173 V176 M196.5 173 V176 M200.5 173 V176 M203.5 170 V176 M207.5 173 V176 M210.5 173 V176 M214.5 173 V176 M218.5 173 V176 M221.5 156 V176 M225.5 173 V176 M228.5 173 V176 M232.5 173 V176 M235.5 173 V176 M239.5 170 V176 M243.5 173 V176 M246.5 173 V176 M250.5 173 V176 M253.5 173 V176 M257.5 156 V176 M261.5 173 V176 M264.5 173 V176 M268.5 173 V176 M271.5 173 V176 M275.5 170 V176 M278.5 173 V176 M282.5 173 V176 M286.5 173 V176 M289.5 173 V176 M293.5 156 V176 M296.5 173 V176 M300.5 173 V176 M303.5 173 V176 M307.5 173 V176 M311.5 170 V176 M314.5 173 V176 M318.5 173 V176 M321.5 173 V176 M325.5 173 V176 M329.5 156 V176 M332.5 173 V176 M336.5 173 V176 M339.5 173 V176 M343.5 173 V176 M346.5 170 V176 M350.5 173 V176 M354.5 173 V176 M357.5 173 V176 M361.5 173 V176 M364.5 156 V176 M368.5 173 V176 M371.5 173 V176 M375.5 173 V176 M379.5 173 V176 M382.5 170 V176 M386.5 173 V176 M389.5 173 V176 M393.5 173 V176 M397.5 173 V176 M400.5 156 V176 M404.5 173 V176 M407.5 173 V176 M411.5 173 V176 M414.5 173 V176 M418.5 170 V176 M422.5 173 V176 M425.5 173 V176 M429.5 173 V176 M432.5 173 V176 M436.5 156 V176 M439.5 173 V176 M443.5 173 V176 M447.5 173 V176 M450.5 173 V176 M454.5 170 V176 M457.5 173 V176 M461.5 173 V176 M464.5 173 V176 M468.5 173 V176 M472.5 156 V176 M475.5 173 V176 M479.5 173 V176 M482.5 173 V176 M486.5 173 V176 M490.5 170 V176 M493.5 173 V176 M497.5 173 V176 M500.5 173 V176 M504.5 173 V176 M507.5 156 V176 M511.5 173 V176 M515.5 173 V176 M518.5 173 V176 M522.5 173 V176 M525.5 170 V176 M529.5 173 V176 M532.5 173 V176 M536.5 173 V176 M540.5 173 V176 M543.5 156 V176 M547.5 173 V176 M550.5 173 V176 M554.5 173 V176 M558.5 173 V176 M561.5 170 V176 M565.5 173 V176 M568.5 173 V176 M572.5 173 V176 M575.5 173 V176 M579.5 156 V176 M583.5 173 V176 M586.5 173 V176 M590.5 173 V176 M593.5 173 V176 M597.5 170 V176 M600.5 173 V176 M604.5 173 V176 M608.5 173 V176 M611.5 173 V176 M615.5 156 V176 M618.5 173 V176 M622.5 173 V176 M626.5 173 V176 M629.5 173 V176 M633.5 170 V176 M636.5 173 V176 M640.5 173 V176 M643.5 173 V176 M647.5 173 V176 M651.5 156 V176 M654.5 173 V176 M658.5 173 V176 M661.5 173 V176 M665.5 173 V176 M668.5 170 V176 M672.5 173 V176 M676.5 173 V176 M679.5 173 V176 M683.5 173 V176 M686.5 156 V176 M690.5 173 V176 M694.5 173 V176 M697.5 173 V176 M701.5 173 V176 M704.5 170 V176 M708.5 173 V176 M711.5 173 V176 M715.5 173 V176 M719.5 173 V176 M722.5 156 V176 M726.5 173 V176 M729.5 173 V176 M733.5 173 V176 M736.5 173 V176 M740.5 170 V176 M744.5 173 V176 M747.5 173 V176 M751.5 173 V176 M754.5 173 V176 M758.5 156 V176 M762.5 173 V176 M765.5 173 V176 M769.5 173 V176 M772.5 173 V176 M776.5 170 V176 M779.5 173 V176 M783.5 173 V176 M787.5 173 V176 M790.5 173 V176 M794.5 156 V176 M797.5 173 V176 M801.5 173 V176 M804.5 173 V176 M808.5 173 V176 M812.5 170 V176 M815.5 173 V176 M819.5 173 V176 M822.5 173 V176 M826.5 173 V176 M830.5 156 V176 M833.5 173 V176 M837.5 173 V176 M840.5 173 V176 M844.5 173 V176 M847.5 170 V176 M851.5 173 V176 M855.5 173 V176 M858.5 173 V176 M862.5 173 V176 M865.5 156 V176 M869.5 173 V176 M872.5 173 V176 M876.5 173 V176 M880.5 173 V176 M883.5 170 V176 M887.5 173 V176 M890.5 173 V176 M894.5 173 V176 M897.5 173 V176 M901.5 156 V176 M905.5 173 V176 M908.5 173 V176 M912.5 173 V176 M915.5 173 V176 M919.5 170 V176 M923.5 173 V176 M926.5 173 V176 M930.5 173 V176 M933.5 173 V176 M937.5 156 V176 M940.5 173 V176 M944.5 173 V176 M948.5 173 V176 M951.5 173 V176 M955.5 170 V176 M958.5 173 V176 M962.5 173 V176 M965.5 173 V176 M969.5 173 V176 M973.5 156 V176 M976.5 173 V176 M980.5 173 V176 M983.5 173 V176 M987.5 173 V176 M991.5 170 V176 M994.5 173 V176 M998.5 173 V176 M1001.5 173 V176 M1005.5 173 V176 M1008.5 156 V176 M1012.5 173 V176 M1016.5 173 V176 M1019.5 173 V176 M1023.5 173 V176 M1026.5 170 V176 M1030.5 173 V176 M1033.5 173 V176 M1037.5 173 V176 M1041.5 173 V176 M1044.5 156 V176 M1048.5 173 V176 M1051.5 173 V176 M1055.5 173 V176 M1059.5 173 V176 M1062.5 170 V176 M1066.5 173 V176 M1069.5 173 V176 M1073.5 173 V176 M1076.5 173 V176 M1080.5 156 V176 M1084.5 173 V176 M1087.5 173 V176 M1091.5 173 V176 M1094.5 173 V176 M1098.5 170 V176 M1101.5 173 V176 M1105.5 173 V176 M1109.5 173 V176 M1112.5 173 V176 M1116.5 156 V176 M1119.5 173 V176 M1123.5 173 V176 M1127.5 173 V176 M1130.5 173 V176 M1134.5 170 V176 M1137.5 173 V176 M1141.5 173 V176 M1144.5 173 V176 M1148.5 173 V176 M1152.5 156 V176 M1155.5 173 V176 M1159.5 173 V176 M1162.5 173 V176 M1166.5 173 V176 M1169.5 170 V176 M1173.5 173 V176 M1177.5 173 V176 M1180.5 173 V176 M1184.5 173 V176 M1187.5 156 V176 M1191.5 173 V176 M1195.5 173 V176 M1198.5 173 V176 M1202.5 173 V176 M1205.5 170 V176 M1209.5 173 V176 M1212.5 173 V176 M1216.5 173 V176 M1220.5 173 V176 M1223.5 156 V176 M1227.5 173 V176 M1230.5 173 V176 M1234.5 173 V176 M1237.5 173 V176 M1241.5 170 V176 M1245.5 173 V176 M1248.5 173 V176 M1252.5 173 V176 M1255.5 173 V176 M1259.5 156 V176 M1263.5 173 V176 M1266.5 173 V176 M1270.5 173 V176 M1273.5 173 V176 M1277.5 170 V176 M1280.5 173 V176 M1284.5 173 V176 M1288.5 173 V176 M1291.5 173 V176 M1295.5 156 V176 M1298.5 173 V176 M1302.5 173 V176 M1305.5 173 V176 M1309.5 173 V176 M1313.5 170 V176 M1316.5 173 V176 M1320.5 173 V176 M1323.5 173 V176 M1327.5 173 V176 M1330.5 156 V176 M1334.5 173 V176 M1338.5 173 V176 M1341.5 173 V176 M1345.5 173 V176 M1348.5 170 V176 M1352.5 173 V176 M1356.5 173 V176 M1359.5 173 V176 M1363.5 173 V176 M1366.5 156 V176 M1370.5 173 V176 M1373.5 173 V176 M1377.5 173 V176 M1381.5 173 V176 M1384.5 170 V176 M1388.5 173 V176 M1391.5 173 V176 M1395.5 173 V176 M1398.5 173 V176 M1402.5 156 V176 M1406.5 173 V176 M1409.5 173 V176 M1413.5 173 V176 M1416.5 173 V176 M1420.5 170 V176 M1424.5 173 V176 M1427.5 173 V176 M1431.5 173 V176 M1434.5 173 V176 M1438.5 156 V176 M1441.5 173 V176 M1445.5 173 V176 M1449.5 173 V176 M1452.5 173 V176 M1456.5 170 V176 M1459.5 173 V176 M1463.5 173 V176 M1466.5 173 V176 M1470.5 173 V176 M1474.5 156 V176 M1477.5 173 V176 M1481.5 173 V176 M1484.5 173 V176 M1488.5 173 V176 M1492.5 170 V176 M1495.5 173 V176 M1499.5 173 V176 M1502.5 173 V176 M1506.5 173 V176 M1509.5 156 V176 M1513.5 173 V176 M1517.5 173 V176 M1520.5 173 V176 M1524.5 173 V176 M1527.5 170 V176 M1531.5 173 V176 M1534.5 173 V176 M1538.5 173 V176 M1542.5 173 V176 M1545.5 156 V176 M1549.5 173 V176 M1552.5 173 V176 M1556.5 173 V176 M1560.5 173 V176 M1563.5 170 V176 M1567.5 173 V176 M1570.5 173 V176 M1574.5 173 V176 M1577.5 173 V176" stroke="#8f8f8f" stroke-width="1"/></svg>
<div class="t" style="left:116px;top:158.5px;font-size:12px;color:#dadada">70</div>
<div class="t" style="left:152px;top:158.5px;font-size:12px;color:#dadada">60</div>
<div class="t" style="left:187px;top:158.5px;font-size:12px;color:#dadada">50</div>
<div class="t" style="left:223px;top:158.5px;font-size:12px;color:#dadada">40</div>
<div class="t" style="left:259px;top:158.5px;font-size:12px;color:#dadada">30</div>
<div class="t" style="left:295px;top:158.5px;font-size:12px;color:#dadada">20</div>
<div class="t" style="left:331px;top:158.5px;font-size:12px;color:#dadada">10</div>
<div class="t" style="left:366px;top:158.5px;font-size:12px;color:#dadada">0</div>
<div class="t" style="left:402px;top:158.5px;font-size:12px;color:#dadada">10</div>
<div class="t" style="left:438px;top:158.5px;font-size:12px;color:#dadada">20</div>
<div class="t" style="left:474px;top:158.5px;font-size:12px;color:#dadada">30</div>
<div class="t" style="left:509px;top:158.5px;font-size:12px;color:#dadada">40</div>
<div class="t" style="left:545px;top:158.5px;font-size:12px;color:#dadada">50</div>
<div class="t" style="left:581px;top:158.5px;font-size:12px;color:#dadada">60</div>
<div class="t" style="left:617px;top:158.5px;font-size:12px;color:#dadada">70</div>
<div class="t" style="left:653px;top:158.5px;font-size:12px;color:#dadada">80</div>
<div class="t" style="left:688px;top:158.5px;font-size:12px;color:#dadada">90</div>
<div class="t" style="left:724px;top:158.5px;font-size:12px;color:#dadada">100</div>
<div class="t" style="left:760px;top:158.5px;font-size:12px;color:#dadada">110</div>
<div class="t" style="left:796px;top:158.5px;font-size:12px;color:#dadada">120</div>
<div class="t" style="left:832px;top:158.5px;font-size:12px;color:#dadada">130</div>
<div class="t" style="left:867px;top:158.5px;font-size:12px;color:#dadada">140</div>
<div class="t" style="left:903px;top:158.5px;font-size:12px;color:#dadada">150</div>
<div class="t" style="left:939px;top:158.5px;font-size:12px;color:#dadada">160</div>
<div class="t" style="left:975px;top:158.5px;font-size:12px;color:#dadada">170</div>
<div class="t" style="left:1010px;top:158.5px;font-size:12px;color:#dadada">180</div>
<div class="t" style="left:1046px;top:158.5px;font-size:12px;color:#dadada">190</div>
<div class="t" style="left:1082px;top:158.5px;font-size:12px;color:#dadada">200</div>
<div class="t" style="left:1118px;top:158.5px;font-size:12px;color:#dadada">210</div>
<div class="t" style="left:1154px;top:158.5px;font-size:12px;color:#dadada">220</div>
<div class="t" style="left:1189px;top:158.5px;font-size:12px;color:#dadada">230</div>
<div class="t" style="left:1225px;top:158.5px;font-size:12px;color:#dadada">240</div>
<div class="t" style="left:1261px;top:158.5px;font-size:12px;color:#dadada">250</div>
<div class="t" style="left:1297px;top:158.5px;font-size:12px;color:#dadada">260</div>
<div class="t" style="left:1332px;top:158.5px;font-size:12px;color:#dadada">270</div>
<div class="t" style="left:1368px;top:158.5px;font-size:12px;color:#dadada">280</div>
<div class="t" style="left:1404px;top:158.5px;font-size:12px;color:#dadada">290</div>
<div class="t" style="left:1440px;top:158.5px;font-size:12px;color:#dadada">300</div>
<div class="t" style="left:1476px;top:158.5px;font-size:12px;color:#dadada">310</div>
<div class="t" style="left:1511px;top:158.5px;font-size:12px;color:#dadada">320</div>
<div class="t" style="left:1547px;top:158.5px;font-size:12px;color:#dadada">330</div>
<svg style="left:0;top:0" width="1700" height="970" viewBox="0 0 1700 970"><path d="M81 178.5 H100 M96 182.5 H100 M96 185.5 H100 M96 189.5 H100 M96 192.5 H100 M93 196.5 H100 M96 199.5 H100 M96 203.5 H100 M96 207.5 H100 M96 210.5 H100 M81 214.5 H100 M96 217.5 H100 M96 221.5 H100 M96 225.5 H100 M96 228.5 H100 M93 232.5 H100 M96 235.5 H100 M96 239.5 H100 M96 242.5 H100 M96 246.5 H100 M81 250.5 H100 M96 253.5 H100 M96 257.5 H100 M96 260.5 H100 M96 264.5 H100 M93 267.5 H100 M96 271.5 H100 M96 275.5 H100 M96 278.5 H100 M96 282.5 H100 M81 285.5 H100 M96 289.5 H100 M96 293.5 H100 M96 296.5 H100 M96 300.5 H100 M93 303.5 H100 M96 307.5 H100 M96 310.5 H100 M96 314.5 H100 M96 318.5 H100 M81 321.5 H100 M96 325.5 H100 M96 328.5 H100 M96 332.5 H100 M96 335.5 H100 M93 339.5 H100 M96 343.5 H100 M96 346.5 H100 M96 350.5 H100 M96 353.5 H100 M81 357.5 H100 M96 361.5 H100 M96 364.5 H100 M96 368.5 H100 M96 371.5 H100 M93 375.5 H100 M96 378.5 H100 M96 382.5 H100 M96 386.5 H100 M96 389.5 H100 M81 393.5 H100 M96 396.5 H100 M96 400.5 H100 M96 403.5 H100 M96 407.5 H100 M93 411.5 H100 M96 414.5 H100 M96 418.5 H100 M96 421.5 H100 M96 425.5 H100 M81 428.5 H100 M96 432.5 H100 M96 436.5 H100 M96 439.5 H100 M96 443.5 H100 M93 446.5 H100 M96 450.5 H100 M96 454.5 H100 M96 457.5 H100 M96 461.5 H100 M81 464.5 H100 M96 468.5 H100 M96 471.5 H100 M96 475.5 H100 M96 479.5 H100 M93 482.5 H100 M96 486.5 H100 M96 489.5 H100 M96 493.5 H100 M96 496.5 H100 M81 500.5 H100 M96 504.5 H100 M96 507.5 H100 M96 511.5 H100 M96 514.5 H100 M93 518.5 H100 M96 522.5 H100 M96 525.5 H100 M96 529.5 H100 M96 532.5 H100 M81 536.5 H100 M96 539.5 H100 M96 543.5 H100 M96 547.5 H100 M96 550.5 H100 M93 554.5 H100 M96 557.5 H100 M96 561.5 H100 M96 564.5 H100 M96 568.5 H100 M81 572.5 H100 M96 575.5 H100 M96 579.5 H100 M96 582.5 H100 M96 586.5 H100 M93 590.5 H100 M96 593.5 H100 M96 597.5 H100 M96 600.5 H100 M96 604.5 H100 M81 607.5 H100 M96 611.5 H100 M96 615.5 H100 M96 618.5 H100 M96 622.5 H100 M93 625.5 H100 M96 629.5 H100 M96 632.5 H100 M96 636.5 H100 M96 640.5 H100 M81 643.5 H100 M96 647.5 H100 M96 650.5 H100 M96 654.5 H100 M96 658.5 H100 M93 661.5 H100 M96 665.5 H100 M96 668.5 H100 M96 672.5 H100 M96 675.5 H100 M81 679.5 H100 M96 683.5 H100 M96 686.5 H100 M96 690.5 H100 M96 693.5 H100 M93 697.5 H100 M96 700.5 H100 M96 704.5 H100 M96 708.5 H100 M96 711.5 H100 M81 715.5 H100 M96 718.5 H100 M96 722.5 H100 M96 726.5 H100 M96 729.5 H100 M93 733.5 H100 M96 736.5 H100 M96 740.5 H100 M96 743.5 H100 M96 747.5 H100 M81 751.5 H100 M96 754.5 H100 M96 758.5 H100 M96 761.5 H100 M96 765.5 H100 M93 768.5 H100 M96 772.5 H100 M96 776.5 H100 M96 779.5 H100 M96 783.5 H100 M81 786.5 H100 M96 790.5 H100 M96 794.5 H100 M96 797.5 H100 M96 801.5 H100 M93 804.5 H100 M96 808.5 H100 M96 811.5 H100 M96 815.5 H100 M96 819.5 H100 M81 822.5 H100 M96 826.5 H100 M96 829.5 H100 M96 833.5 H100 M96 836.5 H100 M93 840.5 H100 M96 844.5 H100 M96 847.5 H100 M96 851.5 H100 M96 854.5 H100 M81 858.5 H100 M96 861.5 H100 M96 865.5 H100 M96 869.5 H100 M96 872.5 H100 M93 876.5 H100 M96 879.5 H100 M96 883.5 H100 M96 887.5 H100 M96 890.5 H100 M81 894.5 H100 M96 897.5 H100 M96 901.5 H100 M96 904.5 H100 M96 908.5 H100 M93 912.5 H100 M96 915.5 H100 M96 919.5 H100 M96 922.5 H100 M96 926.5 H100 M81 929.5 H100 M96 933.5 H100 M96 937.5 H100 M96 940.5 H100 M96 944.5 H100" stroke="#8f8f8f" stroke-width="1"/></svg>
<div class="t" style="left:83px;top:181.5px;font-size:12.5px;color:#d0d0d0;transform:scaleX(0.85);transform-origin:0 0">0</div>
<div class="t" style="left:83px;top:217.5px;font-size:12.5px;color:#d0d0d0;transform:scaleX(0.85);transform-origin:0 0">1</div>
<div class="t" style="left:83px;top:228.2px;font-size:12.5px;color:#d0d0d0;transform:scaleX(0.85);transform-origin:0 0">0</div>
<div class="t" style="left:83px;top:253.5px;font-size:12.5px;color:#d0d0d0;transform:scaleX(0.85);transform-origin:0 0">2</div>
<div class="t" style="left:83px;top:264.2px;font-size:12.5px;color:#d0d0d0;transform:scaleX(0.85);transform-origin:0 0">0</div>
<div class="t" style="left:83px;top:288.5px;font-size:12.5px;color:#d0d0d0;transform:scaleX(0.85);transform-origin:0 0">3</div>
<div class="t" style="left:83px;top:299.2px;font-size:12.5px;color:#d0d0d0;transform:scaleX(0.85);transform-origin:0 0">0</div>
<div class="t" style="left:83px;top:324.5px;font-size:12.5px;color:#d0d0d0;transform:scaleX(0.85);transform-origin:0 0">4</div>
<div class="t" style="left:83px;top:335.2px;font-size:12.5px;color:#d0d0d0;transform:scaleX(0.85);transform-origin:0 0">0</div>
<div class="t" style="left:83px;top:360.5px;font-size:12.5px;color:#d0d0d0;transform:scaleX(0.85);transform-origin:0 0">5</div>
<div class="t" style="left:83px;top:371.2px;font-size:12.5px;color:#d0d0d0;transform:scaleX(0.85);transform-origin:0 0">0</div>
<div class="t" style="left:83px;top:396.5px;font-size:12.5px;color:#d0d0d0;transform:scaleX(0.85);transform-origin:0 0">6</div>
<div class="t" style="left:83px;top:407.2px;font-size:12.5px;color:#d0d0d0;transform:scaleX(0.85);transform-origin:0 0">0</div>
<div class="t" style="left:83px;top:431.5px;font-size:12.5px;color:#d0d0d0;transform:scaleX(0.85);transform-origin:0 0">7</div>
<div class="t" style="left:83px;top:442.2px;font-size:12.5px;color:#d0d0d0;transform:scaleX(0.85);transform-origin:0 0">0</div>
<div class="t" style="left:83px;top:467.5px;font-size:12.5px;color:#d0d0d0;transform:scaleX(0.85);transform-origin:0 0">8</div>
<div class="t" style="left:83px;top:478.2px;font-size:12.5px;color:#d0d0d0;transform:scaleX(0.85);transform-origin:0 0">0</div>
<div class="t" style="left:83px;top:503.5px;font-size:12.5px;color:#d0d0d0;transform:scaleX(0.85);transform-origin:0 0">9</div>
<div class="t" style="left:83px;top:514.2px;font-size:12.5px;color:#d0d0d0;transform:scaleX(0.85);transform-origin:0 0">0</div>
<div class="t" style="left:83px;top:539.5px;font-size:12.5px;color:#d0d0d0;transform:scaleX(0.85);transform-origin:0 0">1</div>
<div class="t" style="left:83px;top:550.2px;font-size:12.5px;color:#d0d0d0;transform:scaleX(0.85);transform-origin:0 0">0</div>
<div class="t" style="left:83px;top:560.9px;font-size:12.5px;color:#d0d0d0;transform:scaleX(0.85);transform-origin:0 0">0</div>
<div class="t" style="left:83px;top:575.5px;font-size:12.5px;color:#d0d0d0;transform:scaleX(0.85);transform-origin:0 0">1</div>
<div class="t" style="left:83px;top:586.2px;font-size:12.5px;color:#d0d0d0;transform:scaleX(0.85);transform-origin:0 0">1</div>
<div class="t" style="left:83px;top:596.9px;font-size:12.5px;color:#d0d0d0;transform:scaleX(0.85);transform-origin:0 0">0</div>
<div class="t" style="left:83px;top:610.5px;font-size:12.5px;color:#d0d0d0;transform:scaleX(0.85);transform-origin:0 0">1</div>
<div class="t" style="left:83px;top:621.2px;font-size:12.5px;color:#d0d0d0;transform:scaleX(0.85);transform-origin:0 0">2</div>
<div class="t" style="left:83px;top:631.9px;font-size:12.5px;color:#d0d0d0;transform:scaleX(0.85);transform-origin:0 0">0</div>
<div class="t" style="left:83px;top:646.5px;font-size:12.5px;color:#d0d0d0;transform:scaleX(0.85);transform-origin:0 0">1</div>
<div class="t" style="left:83px;top:657.2px;font-size:12.5px;color:#d0d0d0;transform:scaleX(0.85);transform-origin:0 0">3</div>
<div class="t" style="left:83px;top:667.9px;font-size:12.5px;color:#d0d0d0;transform:scaleX(0.85);transform-origin:0 0">0</div>
<div class="t" style="left:83px;top:682.5px;font-size:12.5px;color:#d0d0d0;transform:scaleX(0.85);transform-origin:0 0">1</div>
<div class="t" style="left:83px;top:693.2px;font-size:12.5px;color:#d0d0d0;transform:scaleX(0.85);transform-origin:0 0">4</div>
<div class="t" style="left:83px;top:703.9px;font-size:12.5px;color:#d0d0d0;transform:scaleX(0.85);transform-origin:0 0">0</div>
<div class="t" style="left:83px;top:718.5px;font-size:12.5px;color:#d0d0d0;transform:scaleX(0.85);transform-origin:0 0">1</div>
<div class="t" style="left:83px;top:729.2px;font-size:12.5px;color:#d0d0d0;transform:scaleX(0.85);transform-origin:0 0">5</div>
<div class="t" style="left:83px;top:739.9px;font-size:12.5px;color:#d0d0d0;transform:scaleX(0.85);transform-origin:0 0">0</div>
<div class="t" style="left:83px;top:754.5px;font-size:12.5px;color:#d0d0d0;transform:scaleX(0.85);transform-origin:0 0">1</div>
<div class="t" style="left:83px;top:765.2px;font-size:12.5px;color:#d0d0d0;transform:scaleX(0.85);transform-origin:0 0">6</div>
<div class="t" style="left:83px;top:775.9px;font-size:12.5px;color:#d0d0d0;transform:scaleX(0.85);transform-origin:0 0">0</div>
<div class="t" style="left:83px;top:789.5px;font-size:12.5px;color:#d0d0d0;transform:scaleX(0.85);transform-origin:0 0">1</div>
<div class="t" style="left:83px;top:800.2px;font-size:12.5px;color:#d0d0d0;transform:scaleX(0.85);transform-origin:0 0">7</div>
<div class="t" style="left:83px;top:810.9px;font-size:12.5px;color:#d0d0d0;transform:scaleX(0.85);transform-origin:0 0">0</div>
<div class="t" style="left:83px;top:825.5px;font-size:12.5px;color:#d0d0d0;transform:scaleX(0.85);transform-origin:0 0">1</div>
<div class="t" style="left:83px;top:836.2px;font-size:12.5px;color:#d0d0d0;transform:scaleX(0.85);transform-origin:0 0">8</div>
<div class="t" style="left:83px;top:846.9px;font-size:12.5px;color:#d0d0d0;transform:scaleX(0.85);transform-origin:0 0">0</div>
<div class="t" style="left:83px;top:861.5px;font-size:12.5px;color:#d0d0d0;transform:scaleX(0.85);transform-origin:0 0">1</div>
<div class="t" style="left:83px;top:872.2px;font-size:12.5px;color:#d0d0d0;transform:scaleX(0.85);transform-origin:0 0">9</div>
<div class="t" style="left:83px;top:882.9px;font-size:12.5px;color:#d0d0d0;transform:scaleX(0.85);transform-origin:0 0">0</div>
<div class="t" style="left:83px;top:897.5px;font-size:12.5px;color:#d0d0d0;transform:scaleX(0.85);transform-origin:0 0">2</div>
<div class="t" style="left:83px;top:908.2px;font-size:12.5px;color:#d0d0d0;transform:scaleX(0.85);transform-origin:0 0">0</div>
<div class="t" style="left:83px;top:918.9px;font-size:12.5px;color:#d0d0d0;transform:scaleX(0.85);transform-origin:0 0">0</div>
<div class="t" style="left:83px;top:932.5px;font-size:12.5px;color:#d0d0d0;transform:scaleX(0.85);transform-origin:0 0">2</div>
<div class="t" style="left:83px;top:943.2px;font-size:12.5px;color:#d0d0d0;transform:scaleX(0.85);transform-origin:0 0">1</div>
<div class="t" style="left:83px;top:953.9px;font-size:12.5px;color:#d0d0d0;transform:scaleX(0.85);transform-origin:0 0">0</div>
<svg style="left:1272px;top:156px" width="3" height="20" viewBox="0 0 3 20"><path d="M1.5 0 V20" stroke="#e0e0e0" stroke-width="1.1" stroke-dasharray="1.2 1.2"/></svg>
<svg style="left:82px;top:188px" width="18" height="2" viewBox="0 0 18 2"><path d="M0 1 H18" stroke="#e0e0e0" stroke-width="1.2" stroke-dasharray="1.2 1.2"/></svg>
<svg style="left:515px;top:480px" width="230" height="125" viewBox="515 480 230 125"><g fill="#080808" stroke="#080808" stroke-width="1.5" stroke-linejoin="miter" stroke-miterlimit="3"><path d="M536.0,513.2 L529.1,522.5 L537.0,572.0 Q558,569 570.5,560.1 L570.5,554.4 Q556,560 541.6,561.6 L536.6,516 Z"/><path d="M572.6,523.5 L566.9,531.2 L573.1,572 Q605,568 629.3,561.1 L627.8,572.3 L637.6,550.8 Q605,561 577.7,562.2 Z"/><path d="M553.5,522 L556.1,515.3 Q582,514 594.7,493.6 Q588,523 553.5,522 Z"/><path d="M628.7,591.3 Q650,588 667,575.2 L668.7,570.3 L688.4,567.8 L683.5,585.1 L690.9,589.7 L695,580.2 L689.7,578.1 L691.7,567.4 Q710,561 722.3,555.5 L725.5,546.4 L721.4,544.7 C718,536 714,533.5 710.7,534.4 C704,534.5 700,540 696,548 L693.4,556.3 L691.7,558.3 Q680,561 668.7,562.9 L667,558.8 L664.5,557.1 Q657,562 657.5,567.8 Q659,572 664.5,572.8 Q650,582 632.4,583.5 Z"/></g><path d="M695.9,556.3 Q700,546 707.4,544.3 Q713,544 715.7,550.5 Q705,554 695.9,556.3 Z" fill="#fff"/></svg>
<svg style="left:560px;top:335px" width="130" height="35" viewBox="560 335 130 35"><g fill="none" stroke="#0c0c0c" stroke-width="2.6" stroke-linecap="round" stroke-linejoin="round"><path d="M670.5,348.6 C674,346.5 679,346 681,351 C682,354.5 679,355.8 672,356 L664,357 C660,356 659.5,353.5 661.5,353 C664.5,353 665,356.5 663.5,359.5 C661,363 657,364.5 652.5,365.5"/><path d="M654.2,341 L655.6,361.5"/><path d="M641,340 L642.2,357.5 C645,353.5 650,353.5 651.2,357.5 C651.5,360 648,360.8 640,361 L633,361.5 C630,363 627,363.5 623.5,363.8"/><path d="M616.5,352.5 C618.5,355 617,360 612,361.5 L605.5,362 M613,357.5 C610.5,355 611.5,351.5 614.5,351.5 C617.5,352 617,356 616,358"/><path d="M606.5,354.5 C606,358 604,359.5 600,359.5 C598,359.5 597.5,357.5 597.5,356 C597.5,358.5 595.5,359.5 593,359.5 C591,359.5 590,358 590,356 L589.5,358.5 C588,360 585,360 583,359 C581,356.5 582.5,354 585,354.5 C586.5,355 586,357 584,358.5 C580,360.5 576,361 572,362.5 L567.5,363.5"/><path d="M600,347 Q602,344.5 603.8,346.3" stroke-width="1.6"/></g><circle cx="676.5" cy="341.8" r="1.5" fill="#0c0c0c"/></svg>
<svg style="left:595px;top:415px" width="65" height="45" viewBox="595 415 65 45"><g fill="#0a0a0a"><path d="M650.2,425 L647.4,428.5 L650.7,445.6 L653,442.8 Z"/><path d="M635.1,424 L637.9,420.6 L641.4,423.4 L638.6,426.6 Z"/><path d="M642.3,431.7 C643.5,432 644.3,433 644,434.5 L643.3,436.8 L642.3,438.2 L640.9,436.8 L635.4,439.1 C636.5,440 636.8,441.5 636.3,442.8 C635.5,445 634.5,446.5 634,447.5 C631,450 629,451 627.5,451.2 L618.2,452.1 L611.2,453.5 L605.2,454.9 L604.3,454.4 L600.6,428.9 L604.3,424.3 L606.6,447.5 L611.2,449.3 L617.3,447.5 C617.8,445.5 618.3,444 619.1,442.8 C620.5,440.5 622,439.3 623.8,438.7 C625.5,438.2 627,438.2 628.4,438.2 L634.4,434.5 L639.1,432.2 Z"/></g><g fill="#fff"><path d="M619.8,447.6 C620.5,445 622,443 624.5,442.3 C625.5,443 625,445.5 623.5,447.3 Z"/><path d="M626.2,447.3 C628,445.3 631,444 633.3,443.8 C633,446 630.5,447.3 626.2,447.3 Z"/></g><path d="M653.8,447.3 L650.6,449.4 L653.8,450.8 L649.6,454" fill="none" stroke="#0a0a0a" stroke-width="1.3"/></svg>
<svg style="left:550px;top:655px" width="155" height="35" viewBox="550 655 155 35"><g fill="none" stroke="#0c0c0c" stroke-width="2.6" stroke-linecap="round" stroke-linejoin="round"><path d="M696.8,669.5 C697.5,674 696,677.3 691,677.3 L684.5,677.3 C681.5,677 681,673 683.5,672 C686.5,671.5 687.5,675 686,678 C684,681.5 680,682.5 676,682.8"/><path d="M679.5,672 C677,670.5 674.5,671.5 675,674 C675.5,676 677,676.5 677,676.5 L671,677 C670,679.5 667.5,681 664.5,681.5"/><path d="M666.5,676.5 C664,676.5 663,673 665.5,672 C668,671.5 669,674.5 667.5,677.5 C666,680.5 662,681.5 659,681.8"/><path d="M659.5,676.5 C659,679 656.5,680.5 653,681"/><path d="M641.2,665.5 C636,666.5 630,669 621,672.5 C619,674 621,677.5 627.5,679.2 C632,680.3 636,680.3 640,680"/><path d="M608.8,663 L609.7,674.6"/><path d="M604.5,668.8 C605,673 603,675 600.5,674.5 C598.5,674 598.5,672 598.5,671 C598.5,673.5 597,675 595,675 C593.5,675 593,673 593,672 C593,675.5 590,678.5 580.5,680.2"/><path d="M588.3,665.5 L588.8,674.6"/><path d="M578,674.8 C575,675 573.5,672.5 575,670.5 C577,669 580,670 579.5,673 C579,677 574,679.5 567,679.5 C561,679.5 558,677.5 558.2,674.5 C558.5,671 562,669 567,668.5"/><path d="M598.5,665.5 Q600,664 601.8,665" stroke-width="1.5"/><path d="M570,663 Q572,661.5 574,662.5" stroke-width="1.5"/><path d="M608.5,677 L607,679.5" stroke-width="1.4"/></g><circle cx="691.5" cy="680.8" r="1.3" fill="#0c0c0c"/><circle cx="633.5" cy="682.5" r="1.1" fill="#0c0c0c"/><circle cx="637" cy="682.8" r="1.1" fill="#0c0c0c"/></svg>
<div class="a" style="left:1000px;top:332.5px;width:300px;text-align:center;font-size:13px;line-height:18px;color:#1a1a1a;direction:rtl;white-space:nowrap;transform:scaleX(0.896);transform-origin:150px 0">الطبعة الأولى السداسي الثاني 2023</div>
<div class="a" style="left:1000px;top:354px;width:300px;text-align:center;font-size:13px;line-height:18px;color:#1a1a1a;direction:rtl;white-space:nowrap;transform:scaleX(0.91);transform-origin:150px 0">إنها جوسكا: خواطر وشعر/ بوعروري إشراق</div>
<div class="a" style="left:1000px;top:375px;width:300px;text-align:center;font-size:13px;line-height:18px;color:#1a1a1a;direction:rtl;white-space:nowrap;transform:scaleX(0.97);transform-origin:150px 0">رقم الإيداع: 8-25-516-9969-978</div>
<div class="a" style="left:1000px;top:438px;width:300px;text-align:center;font-size:13px;line-height:18px;color:#1a1a1a;direction:rtl;white-space:nowrap;transform:scaleX(0.92);transform-origin:150px 0">دار الكاتب الجزائري للنشر والتوزيع</div>
<div class="a" style="left:1000px;top:460px;width:300px;text-align:center;font-size:13px;line-height:18px;color:#1a1a1a;direction:rtl;white-space:nowrap;transform:scaleX(0.98);transform-origin:150px 0">عين النعجة- الجزائر العاصمة</div>
<div class="a" style="left:1000px;top:481px;width:300px;text-align:center;font-size:13px;line-height:18px;color:#1a1a1a;direction:ltr;white-space:nowrap;transform:scaleX(0.96);transform-origin:150px 0">kateb.eldjazairi23@gmail.com</div>
<svg style="left:978px;top:630px" width="360" height="175" viewBox="0 0 360 175"><path d="M175 15 H24 A22 22 0 0 0 2.5 37 V149 A22 22 0 0 0 24 171 H334 A22 22 0 0 0 356 149 V37 A22 22 0 0 0 334 15 H332" fill="none" stroke="#222" stroke-width="1.4"/></svg>
<div class="a" style="left:1150px;top:630px;width:150px;text-align:right;font-size:13px;line-height:18px;color:#1a1a1a;direction:rtl;white-space:nowrap">جميع الحقوق محفوظة</div>
<div class="a" style="left:971px;top:682px;width:320px;text-align:right;font-size:11px;line-height:17px;color:#111;-webkit-text-stroke:0.25px #111;direction:rtl;white-space:nowrap;transform:scaleX(1.0);transform-origin:318px 0">يمنع نسخ أو استعمال أي جزء من هذا الكتاب بأية وسيلة تصويرية</div>
<div class="a" style="left:985px;top:700px;width:320px;text-align:right;font-size:11px;line-height:17px;color:#111;-webkit-text-stroke:0.25px #111;direction:rtl;white-space:nowrap;transform:scaleX(0.954);transform-origin:318px 0">أو إلكترونة  أو ميكانيكية بما في ذلك التسجيل الفوتوغرافي على أشرطة</div>
<div class="a" style="left:985px;top:718px;width:320px;text-align:right;font-size:11px;line-height:17px;color:#111;-webkit-text-stroke:0.25px #111;direction:rtl;white-space:nowrap;transform:scaleX(0.948);transform-origin:318px 0">أو أقراص مقروءة أو أية وسيلة نشر أخرى بما في ذلك حفظ المعلومات</div>
<div class="a" style="left:985px;top:736px;width:320px;text-align:right;font-size:11px;line-height:17px;color:#111;-webkit-text-stroke:0.25px #111;direction:rtl;white-space:nowrap;transform:scaleX(0.956);transform-origin:318px 0">واسترجاعها من دون إذن خطي من الناشر.</div>
<div class="a" style="left:971px;top:754px;width:320px;text-align:right;font-size:11px;line-height:17px;color:#111;-webkit-text-stroke:0.25px #111;direction:rtl;white-space:nowrap;transform:scaleX(0.935);transform-origin:318px 0">إنّ الآراء الواردة في هذا الكتاب لا تعبر بالضرورة عن رأي الناشر.</div>
<svg style="left:0;top:0" width="1700" height="970" viewBox="0 0 1700 970"><defs><clipPath id="cpw"><rect x="365" y="179" width="1059" height="751"/></clipPath><clipPath id="cpg"><path d="M101 177 H1583 V947 H101 Z M365 179 V930 H1424 V179 Z" clip-rule="evenodd"/></clipPath></defs><g clip-path="url(#cpw)" fill="#dcdcdc"><path d="M766.7,911.5 L770.6,915.4 L766.7,919.3 L762.8,915.4 Z M780.1,911.2 L784,915.1 L780.1,919 L776.2,915.1 Z M931.9,910.8 L935.8,914.7 L931.9,918.6 L928,914.7 Z"/><path d="M802,912 L806.2,909.8 L806.2,931 L802,931 Z M790.7,923 L796.4,923 L796.4,931 L790.7,931 Z M827.4,925 L833,924 L833,931 L827.4,931 Z M844.4,925 L850,924 L850,931 L844.4,931 Z M862,925 L867.7,924 L867.7,931 L862,931 Z"/><path d="M876,909.8 L887,909.8 L887,914 L881,914 Q880,922 887,925 L887,931 L876,931 Z M891,909.8 L903,909.8 L903,916 L891,916 Z M884,925 Q896,920 903,931 L884,931 Z"/><path d="M917.8,931 Q932,918 946,931 Z M748,923 L756,928 L756,931 L748,931 Z"/><path d="M748,929 L951,929 L951,934 Q951,946 939,946 L760,946 Q748,946 748,934 Z"/></g><g clip-path="url(#cpg)" fill="#c4c4c4"><path d="M766.7,911.5 L770.6,915.4 L766.7,919.3 L762.8,915.4 Z M780.1,911.2 L784,915.1 L780.1,919 L776.2,915.1 Z M931.9,910.8 L935.8,914.7 L931.9,918.6 L928,914.7 Z"/><path d="M802,912 L806.2,909.8 L806.2,931 L802,931 Z M790.7,923 L796.4,923 L796.4,931 L790.7,931 Z M827.4,925 L833,924 L833,931 L827.4,931 Z M844.4,925 L850,924 L850,931 L844.4,931 Z M862,925 L867.7,924 L867.7,931 L862,931 Z"/><path d="M876,909.8 L887,909.8 L887,914 L881,914 Q880,922 887,925 L887,931 L876,931 Z M891,909.8 L903,909.8 L903,916 L891,916 Z M884,925 Q896,920 903,931 L884,931 Z"/><path d="M917.8,931 Q932,918 946,931 Z M748,923 L756,928 L756,931 L748,931 Z"/><path d="M748,929 L951,929 L951,934 Q951,946 939,946 L760,946 Q748,946 748,934 Z"/></g></svg>
<div class="a" style="left:740px;top:930px;width:220px;height:1px;background:#3f3f3f"></div>
<div class="a" style="left:893px;top:905px;width:2px;height:25px;background:#2a2a2a"></div>
<div class="a" style="left:81px;top:948px;width:1522px;height:19px;background:#535353"></div>
<div class="a" style="left:81px;top:947px;width:1503px;height:1px;background:#444"></div>
<div class="a" style="left:0;top:967px;width:1700px;height:3px;background:#e8e8e8"></div>
<div class="t" style="left:98px;top:951px;font-size:12.5px;color:#e0e0e0">75%</div>
<svg style="left:151px;top:954px" width="11" height="7" viewBox="0 0 11 7"><path d="M0.8 0.8 L5.5 5.5 L10.2 0.8" fill="none" stroke="#cfcfcf" stroke-width="1.4"/></svg>
<svg style="left:177px;top:952px" width="12" height="12" viewBox="0 0 12 12"><path d="M1 0 V12" stroke="#c8c8c8" stroke-width="2"/><path d="M11 0 L3.5 6 L11 12 Z" fill="#c8c8c8"/></svg>
<svg style="left:205px;top:952px" width="8" height="12" viewBox="0 0 8 12"><path d="M8 0 L0.5 6 L8 12 Z" fill="#c8c8c8"/></svg>
<div class="a" style="left:228px;top:948px;width:113px;height:19px;background:#474747;border:1px solid #5f5f5f;border-radius:3px"></div>
<div class="a" style="left:319px;top:949px;width:1px;height:17px;background:#5f5f5f"></div>
<div class="t" style="left:233px;top:951px;font-size:12.5px;color:#e0e0e0">3</div>
<svg style="left:325px;top:954px" width="11" height="7" viewBox="0 0 11 7"><path d="M0.8 0.8 L5.5 5.5 L10.2 0.8" fill="none" stroke="#cfcfcf" stroke-width="1.4"/></svg>
<svg style="left:357px;top:952px" width="8" height="12" viewBox="0 0 8 12"><path d="M0 0 L7.5 6 L0 12 Z" fill="#c8c8c8"/></svg>
<svg style="left:382px;top:952px" width="12" height="12" viewBox="0 0 12 12"><path d="M11 0 V12" stroke="#c8c8c8" stroke-width="2"/><path d="M1 0 L8.5 6 L1 12 Z" fill="#c8c8c8"/></svg>
<svg style="left:413px;top:950px" width="22" height="17" viewBox="0 0 22 17"><path d="M9 1.5 A7 7 0 1 0 16 9" fill="none" stroke="#c8c8c8" stroke-width="2.6"/><path d="M11 1.5 H13 Q16 2 16 6 V7 H11 Z" fill="#c8c8c8"/><path d="M17 13 L21 13 L19 16 Z" fill="#c8c8c8"/></svg>
<div class="t" style="left:455px;top:951px;font-size:12.5px;color:#e0e0e0;transform:scaleX(1.06);transform-origin:0 0">[Basic] (working)</div>
<svg style="left:583px;top:954px" width="11" height="7" viewBox="0 0 11 7"><path d="M0.8 0.8 L5.5 5.5 L10.2 0.8" fill="none" stroke="#cfcfcf" stroke-width="1.4"/></svg>
<div class="a" style="left:613px;top:950px;width:14px;height:14px;background:#3daa48;border-radius:50%"></div>
<div class="t" style="left:634px;top:951px;font-size:12.5px;color:#e0e0e0">No errors</div>
<svg style="left:712px;top:954px" width="11" height="7" viewBox="0 0 11 7"><path d="M0.8 0.8 L5.5 5.5 L10.2 0.8" fill="none" stroke="#cfcfcf" stroke-width="1.4"/></svg>
<div class="a" style="left:728px;top:949px;width:1px;height:17px;background:#4a4a4a"></div>
<svg style="left:738px;top:952px" width="6" height="11" viewBox="0 0 6 11"><path d="M5.5 0.5 L0.8 5.5 L5.5 10.5" fill="none" stroke="#6f6f6f" stroke-width="1.3"/></svg>
<div class="a" style="left:850px;top:950px;width:548px;height:14px;background:#686868;border-radius:7px"></div>
<svg style="left:1543px;top:952px" width="6" height="11" viewBox="0 0 6 11"><path d="M0.5 0.5 L5.2 5.5 L0.5 10.5" fill="none" stroke="#6f6f6f" stroke-width="1.3"/></svg>
<svg style="left:1562px;top:950px" width="20" height="15" viewBox="0 0 20 15"><rect x="1" y="1" width="18" height="13" fill="none" stroke="#c8c8c8" stroke-width="1.6"/><path d="M10 1 V14" stroke="#c8c8c8" stroke-width="1.6"/></svg>
<svg style="left:1588px;top:952px" width="12" height="12" viewBox="0 0 12 12"><path d="M10 2 h1 v1 h-1z M7 5 h1 v1 h-1z M10 5 h1 v1 h-1z M4 8 h1 v1 h-1z M7 8 h1 v1 h-1z M10 8 h1 v1 h-1z" fill="#7a7a7a"/></svg>
<div class="a" style="left:1603px;top:120px;width:3px;height:847px;background:#3b3b3b"></div>
<div class="a" style="left:1606px;top:120px;width:94px;height:847px;background:#535353"></div>
<div class="a" style="left:1606px;top:120px;width:94px;height:14px;background:#434343"></div>
<svg style="left:1694px;top:124px" width="5" height="6" viewBox="0 0 5 6"><path d="M5 0 L1 3 L5 6 Z" fill="#cfcfcf"/></svg>
<div class="a" style="left:1606px;top:256px;width:94px;height:2px;background:#444"></div>
<div class="a" style="left:1606px;top:414px;width:94px;height:2px;background:#444"></div>
<div class="a" style="left:1606px;top:501px;width:94px;height:2px;background:#444"></div>
<div class="a" style="left:1606px;top:623px;width:94px;height:2px;background:#444"></div>
<svg style="left:1646px;top:141px" width="25" height="5" viewBox="0 0 25 5"><path d="M0.5 0 V5 M2.5 0 V5 M4.5 0 V5 M6.5 0 V5 M8.5 0 V5 M10.5 0 V5 M12.5 0 V5 M14.5 0 V5 M16.5 0 V5 M18.5 0 V5 M20.5 0 V5 M22.5 0 V5" stroke="#7a7a7a" stroke-width="1"/></svg>
<svg style="left:1646px;top:263px" width="25" height="5" viewBox="0 0 25 5"><path d="M0.5 0 V5 M2.5 0 V5 M4.5 0 V5 M6.5 0 V5 M8.5 0 V5 M10.5 0 V5 M12.5 0 V5 M14.5 0 V5 M16.5 0 V5 M18.5 0 V5 M20.5 0 V5 M22.5 0 V5" stroke="#7a7a7a" stroke-width="1"/></svg>
<svg style="left:1646px;top:421px" width="25" height="5" viewBox="0 0 25 5"><path d="M0.5 0 V5 M2.5 0 V5 M4.5 0 V5 M6.5 0 V5 M8.5 0 V5 M10.5 0 V5 M12.5 0 V5 M14.5 0 V5 M16.5 0 V5 M18.5 0 V5 M20.5 0 V5 M22.5 0 V5" stroke="#7a7a7a" stroke-width="1"/></svg>
<svg style="left:1646px;top:509px" width="25" height="5" viewBox="0 0 25 5"><path d="M0.5 0 V5 M2.5 0 V5 M4.5 0 V5 M6.5 0 V5 M8.5 0 V5 M10.5 0 V5 M12.5 0 V5 M14.5 0 V5 M16.5 0 V5 M18.5 0 V5 M20.5 0 V5 M22.5 0 V5" stroke="#7a7a7a" stroke-width="1"/></svg>
<svg style="left:1620px;top:152px" width="23" height="25" viewBox="0 0 23 25"><path d="M1 7 L5 4 L10.5 4 V22 L1 22 Z" fill="#c8c8c8"/><path d="M12.5 4 L18 4 L22 7 V22 L12.5 22 Z" fill="#c8c8c8"/><path d="M11.5 0 V25" stroke="#c8c8c8" stroke-width="1.2"/></svg>
<div class="pl" style="left:1653px;top:158px">Pages</div>
<svg style="left:1620px;top:188px" width="23" height="23" viewBox="0 0 23 23"><path d="M11.5 1 L22 7 L11.5 13 L1 7 Z" fill="#c8c8c8"/><path d="M3 11 L1 12.5 L11.5 18.5 L22 12.5 L20 11 L11.5 16 Z" fill="#c8c8c8"/><path d="M3 16 L1 17 L11.5 23 L22 17 L20 16 L11.5 21 Z" fill="#c8c8c8"/></svg>
<div class="pl" style="left:1653px;top:194px">Laye...</div>
<svg style="left:1620px;top:230px" width="23" height="14" viewBox="0 0 23 14"><rect x="1" y="2" width="13" height="10" rx="5" fill="none" stroke="#c8c8c8" stroke-width="2.2"/><rect x="9" y="2" width="13" height="10" rx="5" fill="none" stroke="#c8c8c8" stroke-width="2.2"/></svg>
<div class="pl" style="left:1653px;top:229px">Links</div>
<svg style="left:1620px;top:279px" width="23" height="17" viewBox="0 0 23 17"><path d="M0 1.5 H23 M0 8.5 H23" stroke="#c8c8c8" stroke-width="2.2"/><path d="M0 15 H23" stroke="#c8c8c8" stroke-width="3.2"/></svg>
<div class="pl" style="left:1653px;top:281px">Stro...</div>
<svg style="left:1620px;top:315px" width="22" height="16" viewBox="0 0 22 16"><rect x="0.7" y="0.7" width="20.6" height="14.6" fill="none" stroke="#c8c8c8" stroke-width="1.4"/><path d="M3 3 h4 v4 h-4z M9 3 h4 v4 h-4z M15 3 h4 v4 h-4z M3 9 h4 v4 h-4z M9 9 h4 v4 h-4z M15 9 h4 v4 h-4z" fill="#c8c8c8"/></svg>
<div class="pl" style="left:1653px;top:316px">Swa...</div>
<svg style="left:1620px;top:350px" width="22" height="17" viewBox="0 0 22 17"><defs><linearGradient id="gr4"><stop offset="0" stop-color="#3a3a3a"/><stop offset="1" stop-color="#d8d8d8"/></linearGradient></defs><rect x="0.7" y="0.7" width="20.6" height="15.6" fill="url(#gr4)" stroke="#c8c8c8" stroke-width="1.4"/></svg>
<div class="pl" style="left:1653px;top:351px">Gra...</div>
<svg style="left:1620px;top:381px" width="22" height="22" viewBox="0 0 22 22"><path d="M0.7 0.7 H8 L9.5 3 H21.3 V21.3 H0.7 Z" fill="none" stroke="#c8c8c8" stroke-width="1.4"/><path d="M4 12 h3 v-2 h3 v2 h2 v-2 h3 v2 h3 v6 h-14z" fill="#c8c8c8"/></svg>
<div class="pl" style="left:1653px;top:387px">CC L...</div>
<svg style="left:1620px;top:434px" width="24" height="22" viewBox="0 0 24 22"><text x="0" y="17" font-family="Liberation Serif" font-style="italic" font-size="22" fill="#c8c8c8">fx</text></svg>
<div class="pl" style="left:1653px;top:439px">Effe...</div>
<svg style="left:1620px;top:470px" width="23" height="21" viewBox="0 0 23 21"><path d="M6 1 H22 V16 H14 M6 1 V9" fill="none" stroke="#c8c8c8" stroke-width="1.5" stroke-dasharray="2.5 1.5"/><path d="M9 4.5 Q14 7 19 4.5 M9 12.5 Q14 10 19 12.5" fill="none" stroke="#c8c8c8" stroke-width="1"/><rect x="1" y="11" width="7" height="7" fill="none" stroke="#c8c8c8" stroke-width="1.3"/><rect x="5" y="14" width="7" height="7" fill="none" stroke="#c8c8c8" stroke-width="1.3"/></svg>
<div class="pl" style="left:1653px;top:474px">Obje...</div>
<svg style="left:1620px;top:520px" width="24" height="24" viewBox="0 0 24 24"><path d="M11 14 L16.5 1 L22 14 M13 10 H20" fill="none" stroke="#c8c8c8" stroke-width="1.7"/><rect x="1" y="14" width="7" height="7" fill="none" stroke="#c8c8c8" stroke-width="1.3"/><rect x="5" y="17" width="7" height="7" fill="none" stroke="#c8c8c8" stroke-width="1.3"/></svg>
<div class="pl" style="left:1653px;top:526px">Char...</div>
<svg style="left:1620px;top:556px" width="24" height="24" viewBox="0 0 24 24"><path d="M1 1 H10 L14 5 V9 L8 18 H1 Z" fill="#c8c8c8"/><path d="M3 9 L5 11 L9 6" fill="none" stroke="#535353" stroke-width="1.3"/><path d="M9 19 L18 9 L22 13 L13 22 L8 23 Z" fill="#c8c8c8"/></svg>
<div class="pl" style="left:1653px;top:561px">Prefl...</div>
<svg style="left:1620px;top:592px" width="24" height="23" viewBox="0 0 24 23"><path d="M13 1 H22 M15 1 V17 M19 1 V17" stroke="#c8c8c8" stroke-width="1.7"/><path d="M15 1 Q9 1 9 5.5 Q9 10 15 10 Z" fill="#c8c8c8"/><rect x="1" y="13" width="7" height="7" fill="none" stroke="#c8c8c8" stroke-width="1.3"/><rect x="5" y="16" width="7" height="7" fill="none" stroke="#c8c8c8" stroke-width="1.3"/></svg>
<div class="pl" style="left:1653px;top:597px">Para...</div>
</body></html>
